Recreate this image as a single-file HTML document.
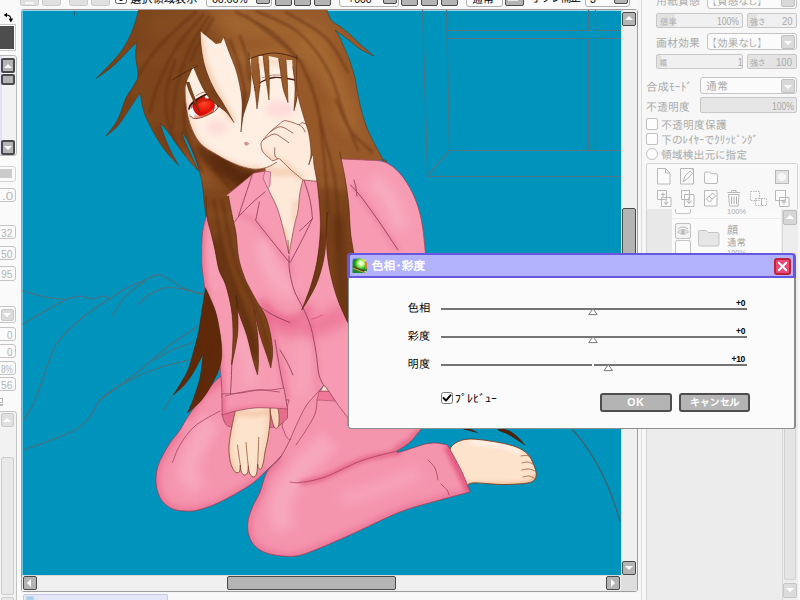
<!DOCTYPE html>
<html lang="ja">
<head>
<meta charset="utf-8">
<title>色相・彩度</title>
<style>
html,body{margin:0;padding:0;}
body{width:800px;height:600px;overflow:hidden;position:relative;background:#f4f4f4;font-family:"Liberation Sans","IPAGothic",sans-serif;font-size:12px;color:#000;}
div,span{box-sizing:border-box;}
.abs{position:absolute;}
.t{position:absolute;white-space:nowrap;line-height:1;}
.dis{color:#a4a4a4;}
/* generic small button like SAI */
.sbtn{position:absolute;background:#b4b4b4;border:1.5px solid #4a4a4a;border-radius:2px;}
.lbtn{position:absolute;background:#e0e0e0;border:1.5px solid #cacaca;border-radius:2.5px;}
.box{position:absolute;background:#fbfbfb;border:1px solid #c4c4c4;border-radius:3px;}
.gbox{position:absolute;background:#ececec;border:1px solid #c8c8c8;border-radius:2px;}
.tri-u{position:absolute;width:0;height:0;border-left:4px solid transparent;border-right:4px solid transparent;border-bottom:4px solid #fff;}
.tri-d{position:absolute;width:0;height:0;border-left:4px solid transparent;border-right:4px solid transparent;border-top:4px solid #fff;}
.tri-l{position:absolute;width:0;height:0;border-top:4px solid transparent;border-bottom:4px solid transparent;border-right:4px solid #fff;}
.tri-r{position:absolute;width:0;height:0;border-top:4px solid transparent;border-bottom:4px solid transparent;border-left:4px solid #fff;}
</style>
</head>
<body>

<!-- ===== canvas frame ===== -->
<div class="abs" id="frame" style="left:21px;top:9px;width:617px;height:583px;border:1px solid #a39c9c;border-radius:3px;background:#f0f0f0;"></div>

<!-- ===== illustration ===== -->
<svg class="abs" id="art" style="left:22px;top:10px;" width="599" height="565" viewBox="22 10 599 565">
<rect x="22" y="10" width="599" height="565" fill="#0093bb"/>
<defs>
<filter id="b1" filterUnits="userSpaceOnUse" x="0" y="0" width="800" height="600"><feGaussianBlur stdDeviation="0.8"/></filter>
<filter id="b2" filterUnits="userSpaceOnUse" x="0" y="0" width="800" height="600"><feGaussianBlur stdDeviation="2"/></filter>
<filter id="b3" filterUnits="userSpaceOnUse" x="0" y="0" width="800" height="600"><feGaussianBlur stdDeviation="3.2"/></filter>
<filter id="b5" filterUnits="userSpaceOnUse" x="0" y="0" width="800" height="600"><feGaussianBlur stdDeviation="5.5"/></filter>
<filter id="b8" filterUnits="userSpaceOnUse" x="0" y="0" width="800" height="600"><feGaussianBlur stdDeviation="9"/></filter>
<linearGradient id="skinF" x1="0" y1="0" x2="1" y2="1"><stop offset="0" stop-color="#fff1e6"/><stop offset="1" stop-color="#fde4d2"/></linearGradient>
<radialGradient id="iris" cx="0.55" cy="0.35" r="0.75"><stop offset="0" stop-color="#ff4a2a"/><stop offset="0.55" stop-color="#ec1408"/><stop offset="1" stop-color="#a00000"/></radialGradient>
</defs>
<rect x="22" y="10" width="599" height="1" fill="#9ad6ec"/><rect x="22" y="10" width="1" height="565" fill="#6cc4e2"/><path d="M74.500,11 V15.500" stroke="#1f5f78" stroke-width="1"/>
<g fill="none" stroke="#4b7585" stroke-width="1.2" stroke-linecap="round">
<path d="M422.5,10 L427.6,175.5 M446.5,10 L449.5,150 M446.5,30.5 H588.5 M595.5,30.5 H621 M447,38.5 H588.5 M595.5,38.5 H621 M588.5,10 V30.5 M588.5,38.5 V150.5 M595.5,10 V30.5 M595.5,38.5 V150.5 M449.5,150.5 H621 M449.5,150.5 L427.6,175.5 M427.6,176.5 H621"/>
<path d="M571,428 Q603,462 620,521" stroke="#41606c" stroke-width="1.2"/>
</g>
<g fill="none" stroke="#4c6f7d" stroke-width="1.1" stroke-linecap="round">
<path d="M23.0,291.0 C26.7,292.0 38.0,295.7 45.0,297.0 C52.0,298.3 59.2,299.2 65.0,299.0 C70.8,298.8 75.4,296.0 80.0,296.0 C84.6,296.0 88.8,299.0 92.5,299.0 C96.2,299.0 99.8,296.0 102.5,296.0 C105.2,296.0 107.9,298.5 109.0,299.0" fill="none"/>
<path d="M109.0,299.0 C112.1,297.1 121.5,290.7 127.5,287.5 C133.5,284.3 139.6,282.1 145.0,280.0 C150.4,277.9 153.8,273.8 160.0,275.0 C166.2,276.2 175.4,284.2 182.5,287.5 C189.6,290.8 199.2,293.8 202.5,295.0" fill="none"/>
<path d="M23.0,324.0 C26.7,321.8 38.0,315.0 45.0,311.0 C52.0,307.0 61.7,301.8 65.0,300.0" fill="none"/>
<path d="M109.0,299.0 C104.6,302.1 91.1,310.2 82.5,317.5 C73.9,324.8 63.3,334.6 57.5,342.5 C51.7,350.4 51.2,355.4 47.5,365.0 C43.8,374.6 38.9,390.8 35.0,400.0 C31.1,409.2 25.8,416.7 24.0,420.0" fill="none"/>
<path d="M145.0,281.0 C141.7,283.7 130.4,291.2 125.0,297.0 C119.6,302.8 114.6,312.8 112.5,316.0" fill="none"/>
<path d="M204.0,294.0 C198.3,292.9 179.0,287.5 170.0,287.5 C161.0,287.5 155.4,291.1 150.0,294.0 C144.6,296.9 139.6,303.2 137.5,305.0" fill="none"/>
<path d="M200.0,325.0 C195.0,328.3 180.0,337.5 170.0,345.0 C160.0,352.5 151.7,360.8 140.0,370.0 C128.3,379.2 106.7,395.0 100.0,400.0" fill="none"/>
<path d="M200.0,357.5 C193.3,359.2 171.7,363.8 160.0,367.5 C148.3,371.2 139.6,375.0 130.0,380.0 C120.4,385.0 109.6,390.8 102.5,397.5 C95.4,404.2 92.9,414.2 87.5,420.0 C82.1,425.8 80.6,427.5 70.0,432.5 C59.4,437.5 31.7,447.1 24.0,450.0" fill="none"/>
<path d="M192.5,342.5 C189.1,343.8 178.2,347.1 172.0,350.0 C165.8,352.9 157.8,358.3 155.0,360.0" fill="none"/>
<path d="M185.0,385.0 C182.8,386.8 175.5,391.8 172.0,396.0 C168.5,400.2 165.3,407.7 164.0,410.0" fill="none"/>
</g>
<path d="M139.5,6.0 C138.8,8.8 136.8,17.7 135.0,23.0 C133.2,28.3 131.5,33.0 129.0,38.0 C126.5,43.0 123.8,48.0 120.0,53.0 C116.2,58.0 110.5,63.8 106.5,68.0 C102.5,72.2 97.8,76.8 96.0,78.5 C98.8,76.5 107.2,71.0 112.5,66.5 C117.8,62.0 123.5,55.5 127.5,51.5 C131.5,47.5 135.0,44.0 136.5,42.5 C136.4,45.0 135.5,52.0 135.8,57.5 C136.0,63.0 138.4,70.8 138.0,75.5 C137.6,80.2 135.5,82.2 133.5,86.0 C131.5,89.8 128.7,92.3 126.0,98.0 C123.3,103.7 120.8,113.7 117.5,120.0 C114.2,126.3 107.9,133.3 106.0,136.0 C108.1,134.2 114.5,129.7 118.5,125.0 C122.5,120.3 126.4,113.3 130.0,108.0 C133.6,102.7 138.3,95.5 140.0,93.0 C140.8,96.7 142.0,107.2 145.0,115.0 C148.0,122.8 154.2,133.5 158.0,140.0 C161.8,146.5 164.6,149.8 168.0,154.0 C171.4,158.2 176.9,163.6 178.7,165.5 C177.5,163.4 174.0,157.8 171.7,153.0 C169.4,148.2 166.6,142.0 164.7,137.0 C162.8,132.0 160.8,125.3 160.0,123.0 C161.2,124.2 164.5,127.3 167.0,130.5 C169.5,133.7 172.3,138.2 175.0,142.0 C177.7,145.8 180.1,149.2 183.0,153.0 C185.9,156.8 190.1,162.0 192.7,165.0 C195.3,168.0 197.5,169.8 198.5,170.8 C197.1,167.9 192.7,158.6 190.3,153.3 C187.9,148.0 185.4,142.6 184.0,139.0 C182.6,135.4 182.3,133.2 182.0,132.0 C183.0,133.6 185.8,137.4 188.0,141.7 C190.2,146.0 192.9,152.2 195.0,158.0 C197.1,163.8 199.5,171.4 200.8,176.7 C202.1,182.0 202.4,185.6 203.0,190.0 C203.6,194.4 203.8,198.5 204.3,203.0 C204.8,207.5 205.7,214.7 206.0,217.0 C207.5,229.2 213.5,277.8 215.0,290.0 C222.5,277.5 252.5,227.5 260.0,215.0 C271.7,215.0 318.3,215.0 330.0,215.0 C332.5,206.7 342.5,173.3 345.0,165.0 C351.3,164.2 376.3,160.3 383.0,160.0 C389.7,159.7 384.7,162.5 385.0,163.0 C382.8,159.0 375.6,146.5 372.0,139.0 C368.4,131.5 365.8,125.3 363.5,118.0 C361.2,110.7 359.5,101.8 358.0,95.0 C356.5,88.2 356.2,83.3 354.8,77.5 C353.3,71.7 351.3,65.1 349.5,60.0 C347.7,54.9 345.8,51.0 344.0,47.0 C342.2,43.0 340.5,38.8 339.0,36.0 C337.5,33.2 335.7,31.0 335.0,30.0 C336.2,30.8 339.5,33.2 342.0,35.0 C344.5,36.8 347.0,38.7 350.0,41.0 C353.0,43.3 356.0,46.5 360.0,49.0 C364.0,51.5 371.7,54.8 374.0,56.0 C372.0,54.3 366.0,49.6 362.0,46.0 C358.0,42.4 353.7,37.8 350.0,34.5 C346.3,31.2 343.2,28.9 340.0,26.5 C336.8,24.1 333.2,22.8 331.0,20.0 C328.8,17.2 327.7,11.7 327.0,10.0 C326.8,9.3 326.2,6.7 326.0,6.0 C294.9,6.0 170.6,6.0 139.5,6.0Z" fill="#97592a"/>
<clipPath id="cBack"><path d="M139.5,6.0 C138.8,8.8 136.8,17.7 135.0,23.0 C133.2,28.3 131.5,33.0 129.0,38.0 C126.5,43.0 123.8,48.0 120.0,53.0 C116.2,58.0 110.5,63.8 106.5,68.0 C102.5,72.2 97.8,76.8 96.0,78.5 C98.8,76.5 107.2,71.0 112.5,66.5 C117.8,62.0 123.5,55.5 127.5,51.5 C131.5,47.5 135.0,44.0 136.5,42.5 C136.4,45.0 135.5,52.0 135.8,57.5 C136.0,63.0 138.4,70.8 138.0,75.5 C137.6,80.2 135.5,82.2 133.5,86.0 C131.5,89.8 128.7,92.3 126.0,98.0 C123.3,103.7 120.8,113.7 117.5,120.0 C114.2,126.3 107.9,133.3 106.0,136.0 C108.1,134.2 114.5,129.7 118.5,125.0 C122.5,120.3 126.4,113.3 130.0,108.0 C133.6,102.7 138.3,95.5 140.0,93.0 C140.8,96.7 142.0,107.2 145.0,115.0 C148.0,122.8 154.2,133.5 158.0,140.0 C161.8,146.5 164.6,149.8 168.0,154.0 C171.4,158.2 176.9,163.6 178.7,165.5 C177.5,163.4 174.0,157.8 171.7,153.0 C169.4,148.2 166.6,142.0 164.7,137.0 C162.8,132.0 160.8,125.3 160.0,123.0 C161.2,124.2 164.5,127.3 167.0,130.5 C169.5,133.7 172.3,138.2 175.0,142.0 C177.7,145.8 180.1,149.2 183.0,153.0 C185.9,156.8 190.1,162.0 192.7,165.0 C195.3,168.0 197.5,169.8 198.5,170.8 C197.1,167.9 192.7,158.6 190.3,153.3 C187.9,148.0 185.4,142.6 184.0,139.0 C182.6,135.4 182.3,133.2 182.0,132.0 C183.0,133.6 185.8,137.4 188.0,141.7 C190.2,146.0 192.9,152.2 195.0,158.0 C197.1,163.8 199.5,171.4 200.8,176.7 C202.1,182.0 202.4,185.6 203.0,190.0 C203.6,194.4 203.8,198.5 204.3,203.0 C204.8,207.5 205.7,214.7 206.0,217.0 C207.5,229.2 213.5,277.8 215.0,290.0 C222.5,277.5 252.5,227.5 260.0,215.0 C271.7,215.0 318.3,215.0 330.0,215.0 C332.5,206.7 342.5,173.3 345.0,165.0 C351.3,164.2 376.3,160.3 383.0,160.0 C389.7,159.7 384.7,162.5 385.0,163.0 C382.8,159.0 375.6,146.5 372.0,139.0 C368.4,131.5 365.8,125.3 363.5,118.0 C361.2,110.7 359.5,101.8 358.0,95.0 C356.5,88.2 356.2,83.3 354.8,77.5 C353.3,71.7 351.3,65.1 349.5,60.0 C347.7,54.9 345.8,51.0 344.0,47.0 C342.2,43.0 340.5,38.8 339.0,36.0 C337.5,33.2 335.7,31.0 335.0,30.0 C336.2,30.8 339.5,33.2 342.0,35.0 C344.5,36.8 347.0,38.7 350.0,41.0 C353.0,43.3 356.0,46.5 360.0,49.0 C364.0,51.5 371.7,54.8 374.0,56.0 C372.0,54.3 366.0,49.6 362.0,46.0 C358.0,42.4 353.7,37.8 350.0,34.5 C346.3,31.2 343.2,28.9 340.0,26.5 C336.8,24.1 333.2,22.8 331.0,20.0 C328.8,17.2 327.7,11.7 327.0,10.0 C326.8,9.3 326.2,6.7 326.0,6.0 C294.9,6.0 170.6,6.0 139.5,6.0Z"/></clipPath>
<g clip-path="url(#cBack)">
<path d="M150.0,30.0 C153.3,29.0 161.7,25.3 170.0,24.0 C178.3,22.7 188.3,22.0 200.0,22.0 C211.7,22.0 225.0,22.7 240.0,24.0 C255.0,25.3 275.0,27.0 290.0,30.0 C305.0,33.0 323.3,40.0 330.0,42.0" stroke="#a56a34" stroke-width="24" filter="url(#b8)" opacity="0.8" fill="none"/>
<path d="M300.0,40.0 C304.2,43.3 318.3,50.8 325.0,60.0 C331.7,69.2 335.5,83.3 340.0,95.0 C344.5,106.7 350.0,124.2 352.0,130.0" stroke="#ac7038" stroke-width="18" filter="url(#b5)" opacity="0.7" fill="none"/>
<path d="M120.0,62.0 C125.0,61.3 139.2,59.7 150.0,58.0 C160.8,56.3 179.2,53.0 185.0,52.0" stroke="#a06632" stroke-width="12" filter="url(#b5)" opacity="0.7" fill="none"/>
<path d="M232.0,50.0 C234.3,51.3 241.0,57.0 246.0,58.0 C251.0,59.0 254.7,57.0 262.0,56.0 C269.3,55.0 280.7,50.3 290.0,52.0 C299.3,53.7 309.7,59.7 318.0,66.0 C326.3,72.3 336.3,86.0 340.0,90.0" stroke="#a56a36" stroke-width="12" filter="url(#b5)" opacity="0.75" fill="none"/>
<path d="M206.0,212.0 C208.3,212.7 215.7,214.7 220.0,216.0 C224.3,217.3 230.0,219.3 232.0,220.0" stroke="#a86c38" stroke-width="9" filter="url(#b3)" opacity="0.6" fill="none"/>
<path d="M318.0,183.0 C320.3,183.2 327.3,183.2 332.0,184.0 C336.7,184.8 343.7,187.3 346.0,188.0" stroke="#a86c38" stroke-width="9" filter="url(#b3)" opacity="0.55" fill="none"/>
<path d="M325.0,110.0 C328.3,112.5 338.3,119.2 345.0,125.0 C351.7,130.8 361.7,141.7 365.0,145.0" stroke="#a06632" stroke-width="10" filter="url(#b5)" opacity="0.6" fill="none"/>
<rect x="150" y="185" width="230" height="260" fill="#4a1a04" opacity="0.34" filter="url(#b8)"/>
<ellipse cx="150" cy="70" rx="75" ry="95" fill="#4a1f06" opacity="0.32" filter="url(#b8)"/>
<path d="M212.0,150.0 C214.7,153.3 222.5,165.0 228.0,170.0 C233.5,175.0 239.3,178.7 245.0,180.0 C250.7,181.3 259.2,178.3 262.0,178.0" stroke="#542608" stroke-width="20" filter="url(#b5)" opacity="0.85" fill="none"/>
<path d="M198.0,146.0 C200.3,148.7 206.3,157.5 212.0,162.0 C217.7,166.5 225.0,170.3 232.0,173.0 C239.0,175.7 250.3,177.2 254.0,178.0" stroke="#5a2a0c" stroke-width="12" filter="url(#b3)" opacity="0.7" fill="none"/>
<path d="M240.0,190.0 C242.5,189.3 252.5,186.7 255.0,186.0" stroke="#542608" stroke-width="16" filter="url(#b3)" opacity="0.8" fill="none"/>
<path d="M212.0,240.0 C214.0,246.7 219.0,266.7 224.0,280.0 C229.0,293.3 236.3,307.5 242.0,320.0 C247.7,332.5 255.3,349.2 258.0,355.0" stroke="#5a2c10" stroke-width="16" filter="url(#b3)" opacity="0.55" fill="none"/>
<path d="M322.0,230.0 C321.3,236.7 320.7,258.3 318.0,270.0 C315.3,281.7 308.0,295.0 306.0,300.0" stroke="#5a2c10" stroke-width="8" filter="url(#b3)" opacity="0.55" fill="none"/>
<path d="M338.0,215.0 C338.3,220.8 339.3,237.5 340.0,250.0 C340.7,262.5 340.7,278.3 342.0,290.0 C343.3,301.7 347.0,315.0 348.0,320.0" stroke="#5a2c10" stroke-width="12" filter="url(#b3)" opacity="0.5" fill="none"/>
<path d="M96.0,78.0 C98.7,76.3 106.7,72.0 112.0,68.0 C117.3,64.0 125.3,56.3 128.0,54.0" stroke="#6a3616" stroke-width="4" filter="url(#b2)" opacity="0.5" fill="none"/>
<path d="M106.0,136.0 C108.3,133.0 115.7,124.7 120.0,118.0 C124.3,111.3 130.0,99.7 132.0,96.0" stroke="#6a3616" stroke-width="5" filter="url(#b2)" opacity="0.5" fill="none"/>
<path d="M178.0,166.0 C176.0,162.7 169.7,152.7 166.0,146.0 C162.3,139.3 157.7,129.3 156.0,126.0" stroke="#6a3616" stroke-width="5" filter="url(#b2)" opacity="0.5" fill="none"/>
<path d="M200.0,170.0 C198.3,166.7 193.3,156.0 190.0,150.0 C186.7,144.0 181.7,136.7 180.0,134.0" stroke="#6a3616" stroke-width="5" filter="url(#b2)" opacity="0.5" fill="none"/>
<path d="M241.0,127.0 C241.3,123.8 242.2,113.8 243.0,108.0 C243.8,102.2 245.5,94.7 246.0,92.0" stroke="#5e2e12" stroke-width="4" filter="url(#b2)" opacity="0.55" fill="none"/>
<path d="M233.0,121.0 C231.2,118.2 225.5,109.2 222.0,104.0 C218.5,98.8 213.7,92.3 212.0,90.0" stroke="#5e2e12" stroke-width="4" filter="url(#b2)" opacity="0.55" fill="none"/>
<g fill="none" stroke="#5a2a0e" stroke-width="2.2" stroke-linecap="round" opacity="0.5" filter="url(#b1)">
<path d="M196.0,12.0 C190.8,16.7 174.3,30.0 165.0,40.0 C155.7,50.0 146.8,62.0 140.0,72.0 C133.2,82.0 126.7,95.3 124.0,100.0" fill="none"/>
<path d="M204.0,14.0 C199.7,19.2 185.7,33.2 178.0,45.0 C170.3,56.8 162.7,73.8 158.0,85.0 C153.3,96.2 151.3,107.5 150.0,112.0" fill="none"/>
<path d="M209.0,16.0 C205.8,21.3 195.5,35.7 190.0,48.0 C184.5,60.3 179.0,76.7 176.0,90.0 C173.0,103.3 172.7,121.7 172.0,128.0" fill="none"/>
<path d="M213.0,18.0 C210.5,22.5 201.8,37.7 198.0,45.0 C194.2,52.3 191.3,59.2 190.0,62.0" fill="none"/>
<path d="M175.0,60.0 C173.5,65.8 166.8,83.3 166.0,95.0 C165.2,106.7 167.0,119.8 170.0,130.0 C173.0,140.2 181.7,151.7 184.0,156.0" fill="none"/>
<path d="M186.0,100.0 C185.7,104.2 183.0,116.7 184.0,125.0 C185.0,133.3 189.0,142.2 192.0,150.0 C195.0,157.8 200.3,168.3 202.0,172.0" fill="none"/>
<path d="M236.0,12.0 C242.0,15.3 261.3,23.7 272.0,32.0 C282.7,40.3 292.7,50.7 300.0,62.0 C307.3,73.3 312.3,87.0 316.0,100.0 C319.7,113.0 320.3,126.7 322.0,140.0 C323.7,153.3 325.0,167.5 326.0,180.0 C327.0,192.5 327.7,209.2 328.0,215.0" fill="none"/>
<path d="M256.0,11.0 C263.0,14.5 286.0,22.2 298.0,32.0 C310.0,41.8 320.3,56.2 328.0,70.0 C335.7,83.8 339.0,101.7 344.0,115.0 C349.0,128.3 355.7,144.2 358.0,150.0" fill="none"/>
<path d="M246.0,16.0 C251.7,20.3 271.3,34.7 280.0,42.0 C288.7,49.3 295.0,57.0 298.0,60.0" fill="none"/>
<path d="M286.0,12.0 C292.7,16.3 315.7,28.0 326.0,38.0 C336.3,48.0 344.3,66.3 348.0,72.0" fill="none"/>
<path d="M300.0,60.0 C302.3,65.8 310.0,82.5 314.0,95.0 C318.0,107.5 320.7,121.7 324.0,135.0 C327.3,148.3 331.7,161.7 334.0,175.0 C336.3,188.3 337.3,202.5 338.0,215.0 C338.7,227.5 338.0,244.2 338.0,250.0" fill="none"/>
<path d="M336.0,100.0 C338.3,105.0 344.0,121.3 350.0,130.0 C356.0,138.7 368.3,148.3 372.0,152.0" fill="none"/>
<path d="M214.0,200.0 C215.0,205.8 218.0,224.7 220.0,235.0 C222.0,245.3 223.3,252.8 226.0,262.0 C228.7,271.2 232.3,279.5 236.0,290.0 C239.7,300.5 244.7,313.3 248.0,325.0 C251.3,336.7 254.7,354.2 256.0,360.0" fill="none"/>
<path d="M222.0,200.0 C223.3,206.7 227.3,228.3 230.0,240.0 C232.7,251.7 234.3,260.0 238.0,270.0 C241.7,280.0 247.7,290.0 252.0,300.0 C256.3,310.0 261.0,320.0 264.0,330.0 C267.0,340.0 269.0,355.0 270.0,360.0" fill="none"/>
<path d="M210.0,290.0 C209.0,295.8 206.7,313.3 204.0,325.0 C201.3,336.7 198.0,348.8 194.0,360.0 C190.0,371.2 182.3,386.7 180.0,392.0" fill="none"/>
<path d="M216.0,300.0 C215.3,305.8 214.0,323.7 212.0,335.0 C210.0,346.3 207.0,357.5 204.0,368.0 C201.0,378.5 195.7,393.0 194.0,398.0" fill="none"/>
<path d="M214.0,168.0 C216.3,171.0 223.0,181.3 228.0,186.0 C233.0,190.7 241.3,194.3 244.0,196.0" fill="none"/>
<path d="M222.0,160.0 C224.7,162.5 232.3,171.7 238.0,175.0 C243.7,178.3 253.0,179.2 256.0,180.0" fill="none"/>
<path d="M230.0,40.0 C231.3,43.7 235.7,54.0 238.0,62.0 C240.3,70.0 243.2,79.7 244.0,88.0 C244.8,96.3 243.2,108.0 243.0,112.0" fill="none"/>
<path d="M240.0,36.0 C241.2,39.7 245.5,50.7 247.0,58.0 C248.5,65.3 248.7,76.3 249.0,80.0" fill="none"/>
</g>
</g>
<path d="M139.5,6.0 C138.8,8.8 136.8,17.7 135.0,23.0 C133.2,28.3 131.5,33.0 129.0,38.0 C126.5,43.0 123.8,48.0 120.0,53.0 C116.2,58.0 110.5,63.8 106.5,68.0 C102.5,72.2 97.8,76.8 96.0,78.5 C98.8,76.5 107.2,71.0 112.5,66.5 C117.8,62.0 123.5,55.5 127.5,51.5 C131.5,47.5 135.0,44.0 136.5,42.5 C136.4,45.0 135.5,52.0 135.8,57.5 C136.0,63.0 138.4,70.8 138.0,75.5 C137.6,80.2 135.5,82.2 133.5,86.0 C131.5,89.8 128.7,92.3 126.0,98.0 C123.3,103.7 120.8,113.7 117.5,120.0 C114.2,126.3 107.9,133.3 106.0,136.0 C108.1,134.2 114.5,129.7 118.5,125.0 C122.5,120.3 126.4,113.3 130.0,108.0 C133.6,102.7 138.3,95.5 140.0,93.0 C140.8,96.7 142.0,107.2 145.0,115.0 C148.0,122.8 154.2,133.5 158.0,140.0 C161.8,146.5 164.6,149.8 168.0,154.0 C171.4,158.2 176.9,163.6 178.7,165.5 C177.5,163.4 174.0,157.8 171.7,153.0 C169.4,148.2 166.6,142.0 164.7,137.0 C162.8,132.0 160.8,125.3 160.0,123.0 C161.2,124.2 164.5,127.3 167.0,130.5 C169.5,133.7 172.3,138.2 175.0,142.0 C177.7,145.8 180.1,149.2 183.0,153.0 C185.9,156.8 190.1,162.0 192.7,165.0 C195.3,168.0 197.5,169.8 198.5,170.8 C197.1,167.9 192.7,158.6 190.3,153.3 C187.9,148.0 185.4,142.6 184.0,139.0 C182.6,135.4 182.3,133.2 182.0,132.0 C183.0,133.6 185.8,137.4 188.0,141.7 C190.2,146.0 192.9,152.2 195.0,158.0 C197.1,163.8 199.5,171.4 200.8,176.7 C202.1,182.0 202.4,185.6 203.0,190.0 C203.6,194.4 203.8,198.5 204.3,203.0 C204.8,207.5 205.7,214.7 206.0,217.0 C207.5,229.2 213.5,277.8 215.0,290.0 C222.5,277.5 252.5,227.5 260.0,215.0 C271.7,215.0 318.3,215.0 330.0,215.0 C332.5,206.7 342.5,173.3 345.0,165.0 C351.3,164.2 376.3,160.3 383.0,160.0 C389.7,159.7 384.7,162.5 385.0,163.0 C382.8,159.0 375.6,146.5 372.0,139.0 C368.4,131.5 365.8,125.3 363.5,118.0 C361.2,110.7 359.5,101.8 358.0,95.0 C356.5,88.2 356.2,83.3 354.8,77.5 C353.3,71.7 351.3,65.1 349.5,60.0 C347.7,54.9 345.8,51.0 344.0,47.0 C342.2,43.0 340.5,38.8 339.0,36.0 C337.5,33.2 335.7,31.0 335.0,30.0 C336.2,30.8 339.5,33.2 342.0,35.0 C344.5,36.8 347.0,38.7 350.0,41.0 C353.0,43.3 356.0,46.5 360.0,49.0 C364.0,51.5 371.7,54.8 374.0,56.0 C372.0,54.3 366.0,49.6 362.0,46.0 C358.0,42.4 353.7,37.8 350.0,34.5 C346.3,31.2 343.2,28.9 340.0,26.5 C336.8,24.1 333.2,22.8 331.0,20.0 C328.8,17.2 327.7,11.7 327.0,10.0 C326.8,9.3 326.2,6.7 326.0,6.0 C294.9,6.0 170.6,6.0 139.5,6.0Z" fill="none" stroke="#5a2a10" stroke-width="0.7" opacity="0.7"/>
<path d="M463.0,427.0 C464.2,427.2 467.3,427.4 470.0,428.5 C472.7,429.6 477.5,432.7 479.0,433.5 C477.5,433.1 472.7,431.7 470.0,431.0 C467.3,430.3 464.2,429.8 463.0,429.5 C463.0,429.1 463.0,427.4 463.0,427.0Z" fill="#4a2410"/>
<path d="M498.0,427.0 C500.0,427.7 506.5,429.2 510.0,431.0 C513.5,432.8 516.3,435.5 519.0,438.0 C521.7,440.5 524.8,444.7 526.0,446.0 C524.3,444.9 519.2,441.5 516.0,439.5 C512.8,437.5 510.0,435.5 507.0,434.0 C504.0,432.5 499.5,431.1 498.0,430.5 C498.0,429.9 498.0,427.6 498.0,427.0Z" fill="#4a2410"/>
<clipPath id="cFoot"><path d="M450.0,449.0 C452.2,443.9 458.3,440.8 465.0,439.5 C471.7,438.2 481.7,439.8 490.0,441.0 C498.3,442.2 508.8,444.3 515.0,446.5 C521.2,448.7 524.6,451.4 527.5,454.0 C530.4,456.6 531.1,459.0 532.5,462.0 C533.9,465.0 535.6,469.2 536.0,472.0 C536.4,474.8 536.4,477.2 535.0,479.0 C533.6,480.8 532.9,482.1 527.5,483.0 C522.1,483.9 511.7,484.5 502.5,484.5 C493.3,484.5 478.6,482.4 472.5,483.0 C466.4,483.6 467.1,487.2 466.0,488.0 C463.7,485.0 454.3,473.0 452.0,470.0 C451.7,466.5 447.8,454.1 450.0,449.0Z"/></clipPath>
<path d="M450.0,449.0 C452.2,443.9 458.3,440.8 465.0,439.5 C471.7,438.2 481.7,439.8 490.0,441.0 C498.3,442.2 508.8,444.3 515.0,446.5 C521.2,448.7 524.6,451.4 527.5,454.0 C530.4,456.6 531.1,459.0 532.5,462.0 C533.9,465.0 535.6,469.2 536.0,472.0 C536.4,474.8 536.4,477.2 535.0,479.0 C533.6,480.8 532.9,482.1 527.5,483.0 C522.1,483.9 511.7,484.5 502.5,484.5 C493.3,484.5 478.6,482.4 472.5,483.0 C466.4,483.6 467.1,487.2 466.0,488.0 C463.7,485.0 454.3,473.0 452.0,470.0 C451.7,466.5 447.8,454.1 450.0,449.0Z" fill="#fde2cc"/>
<g clip-path="url(#cFoot)">
<path d="M462.0,486.0 C468.3,486.1 488.7,486.8 500.0,486.5 C511.3,486.2 523.8,485.8 530.0,484.0 C536.2,482.2 535.8,477.3 537.0,476.0" stroke="#e8a878" stroke-width="7" filter="url(#b2)" opacity="0.75" fill="none"/>
<path d="M470.0,442.0 C475.0,442.5 491.7,443.3 500.0,445.0 C508.3,446.7 516.7,450.8 520.0,452.0" stroke="#fff4ea" stroke-width="6" filter="url(#b2)" opacity="0.8" fill="none"/>
</g>
<path d="M450.0,449.0 C452.2,443.9 458.3,440.8 465.0,439.5 C471.7,438.2 481.7,439.8 490.0,441.0 C498.3,442.2 508.8,444.3 515.0,446.5 C521.2,448.7 524.6,451.4 527.5,454.0 C530.4,456.6 531.1,459.0 532.5,462.0 C533.9,465.0 535.6,469.2 536.0,472.0 C536.4,474.8 536.4,477.2 535.0,479.0 C533.6,480.8 532.9,482.1 527.5,483.0 C522.1,483.9 511.7,484.5 502.5,484.5 C493.3,484.5 478.6,482.4 472.5,483.0 C466.4,483.6 467.1,487.2 466.0,488.0 C463.7,485.0 454.3,473.0 452.0,470.0 C451.7,466.5 447.8,454.1 450.0,449.0Z" fill="none" stroke="#7a3a20" stroke-width="0.9"/>
<g fill="none" stroke="#a05a38" stroke-width="0.8" stroke-linecap="round">
<path d="M521.0,456.0 C522.0,455.9 525.3,455.2 527.0,455.5 C528.7,455.8 530.3,457.6 531.0,458.0" fill="none"/>
<path d="M522.0,463.0 C523.0,462.8 526.1,461.8 528.0,462.0 C529.9,462.2 532.6,464.1 533.5,464.5" fill="none"/>
<path d="M522.0,470.0 C523.2,469.8 526.8,468.8 529.0,469.0 C531.2,469.2 534.0,470.7 535.0,471.0" fill="none"/>
<path d="M523.0,477.0 C524.0,476.8 527.2,475.8 529.0,476.0 C530.8,476.2 533.2,477.7 534.0,478.0" fill="none"/>
</g>
<clipPath id="cL"><path d="M245.0,370.0 C241.1,371.0 228.3,371.8 221.5,376.0 C214.7,380.2 209.4,388.5 204.0,395.0 C198.6,401.5 193.0,409.2 189.0,415.0 C185.0,420.8 183.2,425.3 180.0,430.0 C176.8,434.7 172.8,438.8 170.0,443.0 C167.2,447.2 165.0,451.2 163.0,455.0 C161.0,458.8 159.2,462.2 158.0,466.0 C156.8,469.8 156.1,473.8 156.0,478.0 C155.9,482.2 156.3,487.0 157.5,491.0 C158.7,495.0 160.4,499.0 163.0,502.0 C165.6,505.0 169.3,507.5 173.0,509.0 C176.7,510.5 180.8,510.8 185.0,511.0 C189.2,511.2 192.2,511.5 198.0,510.0 C203.8,508.5 211.3,506.2 220.0,502.0 C228.7,497.8 242.2,490.3 250.0,485.0 C257.8,479.7 261.7,475.0 267.0,470.0 C272.3,465.0 276.5,461.7 282.0,455.0 C287.5,448.3 297.0,434.2 300.0,430.0 C300.0,420.3 300.0,381.7 300.0,372.0 C290.8,371.7 254.2,370.3 245.0,370.0Z"/></clipPath>
<clipPath id="cR"><path d="M300.0,390.0 C298.3,398.3 291.7,431.7 290.0,440.0 C288.3,443.0 283.8,452.7 280.0,458.0 C276.2,463.3 270.3,466.3 267.0,472.0 C263.7,477.7 262.4,486.2 260.0,492.0 C257.6,497.8 254.5,502.2 252.5,507.0 C250.5,511.8 248.7,516.5 248.0,521.0 C247.3,525.5 247.5,530.0 248.5,534.0 C249.5,538.0 251.4,542.0 254.0,545.0 C256.6,548.0 260.0,550.2 264.0,552.0 C268.0,553.8 272.7,554.8 278.0,555.5 C283.3,556.2 289.8,556.9 296.0,556.0 C302.2,555.1 306.0,553.5 315.0,550.0 C324.0,546.5 335.8,541.3 350.0,535.0 C364.2,528.7 385.0,517.8 400.0,512.0 C415.0,506.2 428.3,503.3 440.0,500.0 C451.7,496.7 465.0,493.3 470.0,492.0 C468.5,488.3 464.8,477.8 461.0,470.0 C457.2,462.2 449.8,449.2 447.5,445.0 C445.6,444.7 439.8,443.2 436.0,443.0 C432.2,442.8 426.8,443.8 425.0,444.0 C420.8,445.3 404.7,450.8 400.0,452.0 C395.3,453.2 397.5,451.2 397.0,451.0 C399.2,449.5 405.8,445.8 410.0,442.0 C414.2,438.2 420.0,430.3 422.0,428.0 C423.3,421.7 428.7,396.3 430.0,390.0 C408.3,390.0 321.7,390.0 300.0,390.0Z"/></clipPath>
<path d="M245.0,370.0 C241.1,371.0 228.3,371.8 221.5,376.0 C214.7,380.2 209.4,388.5 204.0,395.0 C198.6,401.5 193.0,409.2 189.0,415.0 C185.0,420.8 183.2,425.3 180.0,430.0 C176.8,434.7 172.8,438.8 170.0,443.0 C167.2,447.2 165.0,451.2 163.0,455.0 C161.0,458.8 159.2,462.2 158.0,466.0 C156.8,469.8 156.1,473.8 156.0,478.0 C155.9,482.2 156.3,487.0 157.5,491.0 C158.7,495.0 160.4,499.0 163.0,502.0 C165.6,505.0 169.3,507.5 173.0,509.0 C176.7,510.5 180.8,510.8 185.0,511.0 C189.2,511.2 192.2,511.5 198.0,510.0 C203.8,508.5 211.3,506.2 220.0,502.0 C228.7,497.8 242.2,490.3 250.0,485.0 C257.8,479.7 261.7,475.0 267.0,470.0 C272.3,465.0 276.5,461.7 282.0,455.0 C287.5,448.3 297.0,434.2 300.0,430.0 C300.0,420.3 300.0,381.7 300.0,372.0 C290.8,371.7 254.2,370.3 245.0,370.0Z" fill="#f594ad"/>
<g clip-path="url(#cL)">
<path d="M180.0,430.0 C178.3,432.2 172.8,438.8 170.0,443.0 C167.2,447.2 165.0,451.2 163.0,455.0 C161.0,458.8 159.2,462.2 158.0,466.0 C156.8,469.8 156.1,473.8 156.0,478.0 C155.9,482.2 156.3,487.0 157.5,491.0 C158.7,495.0 160.4,499.0 163.0,502.0 C165.6,505.0 169.3,507.4 173.0,509.0 C176.7,510.6 180.8,511.2 185.0,511.5 C189.2,511.8 192.2,511.9 198.0,510.5 C203.8,509.1 211.3,507.1 220.0,503.0 C228.7,498.9 242.2,491.3 250.0,486.0 C257.8,480.7 264.2,473.5 267.0,471.0" stroke="#e4628a" stroke-width="8" filter="url(#b3)" opacity="0.6" fill="none"/>
<path d="M212.0,420.0 C209.2,425.0 199.0,440.8 195.0,450.0 C191.0,459.2 187.2,468.7 188.0,475.0 C188.8,481.3 198.0,485.8 200.0,488.0" stroke="#f8aec2" stroke-width="20" filter="url(#b5)" opacity="0.75" fill="none"/>
<path d="M232.0,372.0 C227.5,375.3 212.7,384.3 205.0,392.0 C197.3,399.7 189.2,413.7 186.0,418.0" stroke="#e2587e" stroke-width="6" filter="url(#b3)" opacity="0.7" fill="none"/>
</g>
<path d="M245.0,370.0 C241.1,371.0 228.3,371.8 221.5,376.0 C214.7,380.2 209.4,388.5 204.0,395.0 C198.6,401.5 193.0,409.2 189.0,415.0 C185.0,420.8 183.2,425.3 180.0,430.0 C176.8,434.7 172.8,438.8 170.0,443.0 C167.2,447.2 165.0,451.2 163.0,455.0 C161.0,458.8 159.2,462.2 158.0,466.0 C156.8,469.8 156.1,473.8 156.0,478.0 C155.9,482.2 156.3,487.0 157.5,491.0 C158.7,495.0 160.4,499.0 163.0,502.0 C165.6,505.0 169.3,507.5 173.0,509.0 C176.7,510.5 180.8,510.8 185.0,511.0 C189.2,511.2 192.2,511.5 198.0,510.0 C203.8,508.5 211.3,506.2 220.0,502.0 C228.7,497.8 242.2,490.3 250.0,485.0 C257.8,479.7 261.7,475.0 267.0,470.0 C272.3,465.0 276.5,461.7 282.0,455.0 C287.5,448.3 297.0,434.2 300.0,430.0 C300.0,420.3 300.0,381.7 300.0,372.0 C290.8,371.7 254.2,370.3 245.0,370.0Z" fill="none" stroke="#9c3c54" stroke-width="0.8"/>
<path d="M300.0,390.0 C298.3,398.3 291.7,431.7 290.0,440.0 C288.3,443.0 283.8,452.7 280.0,458.0 C276.2,463.3 270.3,466.3 267.0,472.0 C263.7,477.7 262.4,486.2 260.0,492.0 C257.6,497.8 254.5,502.2 252.5,507.0 C250.5,511.8 248.7,516.5 248.0,521.0 C247.3,525.5 247.5,530.0 248.5,534.0 C249.5,538.0 251.4,542.0 254.0,545.0 C256.6,548.0 260.0,550.2 264.0,552.0 C268.0,553.8 272.7,554.8 278.0,555.5 C283.3,556.2 289.8,556.9 296.0,556.0 C302.2,555.1 306.0,553.5 315.0,550.0 C324.0,546.5 335.8,541.3 350.0,535.0 C364.2,528.7 385.0,517.8 400.0,512.0 C415.0,506.2 428.3,503.3 440.0,500.0 C451.7,496.7 465.0,493.3 470.0,492.0 C468.5,488.3 464.8,477.8 461.0,470.0 C457.2,462.2 449.8,449.2 447.5,445.0 C445.6,444.7 439.8,443.2 436.0,443.0 C432.2,442.8 426.8,443.8 425.0,444.0 C420.8,445.3 404.7,450.8 400.0,452.0 C395.3,453.2 397.5,451.2 397.0,451.0 C399.2,449.5 405.8,445.8 410.0,442.0 C414.2,438.2 420.0,430.3 422.0,428.0 C423.3,421.7 428.7,396.3 430.0,390.0 C408.3,390.0 321.7,390.0 300.0,390.0Z" fill="#f594ad"/>
<g clip-path="url(#cR)">
<path d="M280.0,458.0 C277.8,460.3 270.3,466.3 267.0,472.0 C263.7,477.7 262.4,486.2 260.0,492.0 C257.6,497.8 254.5,502.2 252.5,507.0 C250.5,511.8 248.7,516.5 248.0,521.0 C247.3,525.5 247.5,530.0 248.5,534.0 C249.5,538.0 251.4,542.0 254.0,545.0 C256.6,548.0 260.0,550.2 264.0,552.0 C268.0,553.8 272.7,555.2 278.0,556.0 C283.3,556.8 289.8,557.4 296.0,556.5 C302.2,555.6 306.0,554.0 315.0,550.5 C324.0,547.0 335.8,541.8 350.0,535.5 C364.2,529.2 385.0,518.3 400.0,512.5 C415.0,506.7 428.3,503.8 440.0,500.5 C451.7,497.2 465.0,493.8 470.0,492.5" stroke="#e4628a" stroke-width="8" filter="url(#b3)" opacity="0.6" fill="none"/>
<path d="M330.0,440.0 C325.0,445.0 308.3,459.2 300.0,470.0 C291.7,480.8 282.5,495.0 280.0,505.0 C277.5,515.0 284.2,525.8 285.0,530.0" stroke="#f8aec2" stroke-width="22" filter="url(#b5)" opacity="0.75" fill="none"/>
<path d="M340.0,500.0 C346.7,498.0 366.7,492.7 380.0,488.0 C393.3,483.3 413.3,474.7 420.0,472.0" stroke="#f8aabf" stroke-width="16" filter="url(#b5)" opacity="0.6" fill="none"/>
<path d="M300.0,483.0 C304.2,482.0 314.7,480.8 325.0,477.0 C335.3,473.2 349.5,464.2 362.0,460.0 C374.5,455.8 393.7,453.3 400.0,452.0" stroke="#de5479" stroke-width="5" filter="url(#b2)" opacity="0.7" fill="none"/>
<path d="M447.0,446.0 C448.8,449.7 454.2,460.3 458.0,468.0 C461.8,475.7 468.0,488.0 470.0,492.0" stroke="#e04a74" stroke-width="7" filter="url(#b2)" opacity="0.8" fill="none"/>
<path d="M395.0,450.0 C397.2,448.7 403.8,445.3 408.0,442.0 C412.2,438.7 418.0,432.0 420.0,430.0" stroke="#e2587e" stroke-width="6" filter="url(#b2)" opacity="0.7" fill="none"/>
</g>
<path d="M300.0,390.0 C298.3,398.3 291.7,431.7 290.0,440.0 C288.3,443.0 283.8,452.7 280.0,458.0 C276.2,463.3 270.3,466.3 267.0,472.0 C263.7,477.7 262.4,486.2 260.0,492.0 C257.6,497.8 254.5,502.2 252.5,507.0 C250.5,511.8 248.7,516.5 248.0,521.0 C247.3,525.5 247.5,530.0 248.5,534.0 C249.5,538.0 251.4,542.0 254.0,545.0 C256.6,548.0 260.0,550.2 264.0,552.0 C268.0,553.8 272.7,554.8 278.0,555.5 C283.3,556.2 289.8,556.9 296.0,556.0 C302.2,555.1 306.0,553.5 315.0,550.0 C324.0,546.5 335.8,541.3 350.0,535.0 C364.2,528.7 385.0,517.8 400.0,512.0 C415.0,506.2 428.3,503.3 440.0,500.0 C451.7,496.7 465.0,493.3 470.0,492.0 C468.5,488.3 464.8,477.8 461.0,470.0 C457.2,462.2 449.8,449.2 447.5,445.0 C445.6,444.7 439.8,443.2 436.0,443.0 C432.2,442.8 426.8,443.8 425.0,444.0 C420.8,445.3 404.7,450.8 400.0,452.0 C395.3,453.2 397.5,451.2 397.0,451.0 C399.2,449.5 405.8,445.8 410.0,442.0 C414.2,438.2 420.0,430.3 422.0,428.0 C423.3,421.7 428.7,396.3 430.0,390.0 C408.3,390.0 321.7,390.0 300.0,390.0Z" fill="none" stroke="#9c3c54" stroke-width="0.8"/>
<g fill="none" stroke="#a8405c" stroke-width="0.8" stroke-linecap="round">
<path d="M397.0,451.0 C391.2,452.6 374.0,456.2 362.0,460.5 C350.0,464.8 335.3,473.3 325.0,477.0 C314.7,480.7 305.8,481.7 300.0,482.5 C294.2,483.3 291.7,482.1 290.0,482.0" fill="none"/>
<path d="M220.0,411.0 C215.8,413.5 201.7,420.3 195.0,426.0 C188.3,431.7 183.8,438.9 180.0,445.0 C176.2,451.1 173.8,459.6 172.5,462.5" fill="none"/>
<path d="M428.0,460.0 C429.2,461.3 433.3,464.7 435.0,468.0 C436.7,471.3 437.5,478.0 438.0,480.0" fill="none"/>
<path d="M441.0,484.0 C442.0,485.0 445.7,488.2 447.0,490.0 C448.3,491.8 448.7,494.2 449.0,495.0" fill="none"/>
<path d="M317.0,400.0 C316.7,402.3 316.8,409.0 315.0,414.0 C313.2,419.0 309.2,424.8 306.0,430.0 C302.8,435.2 297.7,442.5 296.0,445.0" fill="none"/>
</g>
<clipPath id="cT"><path d="M206.0,217.0 C209.5,213.3 223.5,198.7 227.0,195.0 C231.5,191.3 249.5,176.7 254.0,173.0 C255.8,172.7 263.2,171.3 265.0,171.0 C271.3,172.4 296.7,178.1 303.0,179.5 C305.0,178.9 313.0,176.6 315.0,176.0 C319.5,173.2 337.5,161.8 342.0,159.0 C345.8,159.2 357.9,159.5 365.0,160.0 C372.1,160.5 378.8,159.8 384.5,162.0 C390.2,164.2 394.9,168.0 399.5,173.0 C404.1,178.0 408.7,185.5 412.0,192.0 C415.3,198.5 417.7,205.7 419.5,212.0 C421.3,218.3 422.0,223.0 423.0,230.0 C424.0,237.0 425.1,250.0 425.5,254.0 C425.4,282.7 425.1,397.3 425.0,426.0 C412.2,426.0 360.8,426.0 348.0,426.0 C348.0,424.7 348.0,419.3 348.0,418.0 C346.0,415.3 339.3,406.7 336.0,402.0 C332.7,397.3 330.0,392.8 328.0,390.0 C326.0,387.2 324.7,385.8 324.0,385.0 C323.0,386.2 321.0,388.5 318.0,392.0 C315.0,395.5 309.7,400.3 306.0,406.0 C302.3,411.7 298.7,420.3 296.0,426.0 C293.3,431.7 291.0,437.7 290.0,440.0 C289.3,439.3 287.3,438.3 286.0,436.0 C284.7,433.7 282.7,427.7 282.0,426.0 C283.2,421.7 287.8,404.3 289.0,400.0 C277.8,399.7 233.2,398.3 222.0,398.0 C221.9,395.8 221.8,389.7 221.5,385.0 C221.2,380.3 220.9,375.0 220.5,370.0 C220.1,365.0 219.8,360.0 219.0,355.0 C218.2,350.0 217.3,345.8 216.0,340.0 C214.7,334.2 212.6,326.7 211.0,320.0 C209.4,313.3 208.0,307.5 206.7,300.0 C205.4,292.5 203.8,282.0 203.0,275.0 C202.2,268.0 201.8,265.0 201.7,258.0 C201.6,251.0 201.8,239.8 202.5,233.0 C203.2,226.2 205.4,219.7 206.0,217.0Z"/></clipPath>
<path d="M206.0,217.0 C209.5,213.3 223.5,198.7 227.0,195.0 C231.5,191.3 249.5,176.7 254.0,173.0 C255.8,172.7 263.2,171.3 265.0,171.0 C271.3,172.4 296.7,178.1 303.0,179.5 C305.0,178.9 313.0,176.6 315.0,176.0 C319.5,173.2 337.5,161.8 342.0,159.0 C345.8,159.2 357.9,159.5 365.0,160.0 C372.1,160.5 378.8,159.8 384.5,162.0 C390.2,164.2 394.9,168.0 399.5,173.0 C404.1,178.0 408.7,185.5 412.0,192.0 C415.3,198.5 417.7,205.7 419.5,212.0 C421.3,218.3 422.0,223.0 423.0,230.0 C424.0,237.0 425.1,250.0 425.5,254.0 C425.4,282.7 425.1,397.3 425.0,426.0 C412.2,426.0 360.8,426.0 348.0,426.0 C348.0,424.7 348.0,419.3 348.0,418.0 C346.0,415.3 339.3,406.7 336.0,402.0 C332.7,397.3 330.0,392.8 328.0,390.0 C326.0,387.2 324.7,385.8 324.0,385.0 C323.0,386.2 321.0,388.5 318.0,392.0 C315.0,395.5 309.7,400.3 306.0,406.0 C302.3,411.7 298.7,420.3 296.0,426.0 C293.3,431.7 291.0,437.7 290.0,440.0 C289.3,439.3 287.3,438.3 286.0,436.0 C284.7,433.7 282.7,427.7 282.0,426.0 C283.2,421.7 287.8,404.3 289.0,400.0 C277.8,399.7 233.2,398.3 222.0,398.0 C221.9,395.8 221.8,389.7 221.5,385.0 C221.2,380.3 220.9,375.0 220.5,370.0 C220.1,365.0 219.8,360.0 219.0,355.0 C218.2,350.0 217.3,345.8 216.0,340.0 C214.7,334.2 212.6,326.7 211.0,320.0 C209.4,313.3 208.0,307.5 206.7,300.0 C205.4,292.5 203.8,282.0 203.0,275.0 C202.2,268.0 201.8,265.0 201.7,258.0 C201.6,251.0 201.8,239.8 202.5,233.0 C203.2,226.2 205.4,219.7 206.0,217.0Z" fill="#f69bb2"/>
<g clip-path="url(#cT)">
<path d="M250.0,308.0 C253.3,310.0 262.5,316.7 270.0,320.0 C277.5,323.3 286.3,327.3 295.0,328.0 C303.7,328.7 313.3,326.7 322.0,324.0 C330.7,321.3 342.8,314.0 347.0,312.0" stroke="#e9688b" stroke-width="20" filter="url(#b5)" opacity="0.6" fill="none"/>
<path d="M206.0,217.0 C205.4,219.7 203.2,226.2 202.5,233.0 C201.8,239.8 201.6,251.0 201.7,258.0 C201.8,265.0 202.2,268.0 203.0,275.0 C203.8,282.0 205.4,292.5 206.7,300.0 C208.0,307.5 209.4,313.3 211.0,320.0 C212.6,326.7 214.7,334.2 216.0,340.0 C217.3,345.8 218.2,350.0 219.0,355.0 C219.8,360.0 220.1,365.0 220.5,370.0 C220.9,375.0 221.2,380.3 221.5,385.0 C221.8,389.7 221.9,395.8 222.0,398.0" stroke="#e05a80" stroke-width="7" filter="url(#b2)" opacity="0.46" fill="none"/>
<path d="M262.0,300.0 C263.7,302.2 268.0,309.5 272.0,313.0 C276.0,316.5 281.2,320.5 286.0,321.0 C290.8,321.5 296.7,318.7 301.0,316.0 C305.3,313.3 310.2,306.8 312.0,305.0" stroke="#e45c82" stroke-width="8" filter="url(#b3)" opacity="0.5" fill="none"/>
<path d="M266.0,312.0 C267.3,316.7 271.3,330.3 274.0,340.0 C276.7,349.7 279.8,360.0 282.0,370.0 C284.2,380.0 286.2,395.0 287.0,400.0" stroke="#e66488" stroke-width="6" filter="url(#b2)" opacity="0.4" fill="none"/>
<path d="M240.0,215.0 C242.7,216.2 250.7,217.3 256.0,222.0 C261.3,226.7 266.7,236.3 272.0,243.0 C277.3,249.7 285.3,258.8 288.0,262.0" stroke="#e66488" stroke-width="5" filter="url(#b2)" opacity="0.34" fill="none"/>
<path d="M352.0,186.0 C354.2,188.8 360.3,196.7 365.0,203.0 C369.7,209.3 374.5,216.2 380.0,224.0 C385.5,231.8 395.0,245.7 398.0,250.0" stroke="#ea6c8e" stroke-width="5" filter="url(#b2)" opacity="0.37" fill="none"/>
<path d="M290.0,262.0 C290.7,265.8 291.5,277.2 294.0,285.0 C296.5,292.8 301.7,299.8 305.0,309.0 C308.3,318.2 312.0,329.8 314.0,340.0 C316.0,350.2 316.3,361.3 317.0,370.0 C317.7,378.7 317.8,388.3 318.0,392.0" stroke="#e66488" stroke-width="4" filter="url(#b2)" opacity="0.31" fill="none"/>
<path d="M262.0,240.0 C263.0,243.7 265.0,255.0 268.0,262.0 C271.0,269.0 275.3,277.0 280.0,282.0 C284.7,287.0 293.3,290.3 296.0,292.0" stroke="#fbbccb" stroke-width="16" filter="url(#b5)" opacity="0.53" fill="none"/>
<path d="M372.0,178.0 C375.0,181.7 385.0,191.3 390.0,200.0 C395.0,208.7 400.0,225.0 402.0,230.0" stroke="#fbbccb" stroke-width="16" filter="url(#b5)" opacity="0.5" fill="none"/>
<path d="M330.0,250.0 C331.3,254.2 336.3,266.7 338.0,275.0 C339.7,283.3 339.7,295.8 340.0,300.0" stroke="#f9b0c3" stroke-width="12" filter="url(#b5)" opacity="0.37" fill="none"/>
<path d="M240.0,330.0 C241.3,335.0 246.0,350.8 248.0,360.0 C250.0,369.2 251.3,380.8 252.0,385.0" stroke="#fab8c8" stroke-width="12" filter="url(#b5)" opacity="0.5" fill="none"/>
<path d="M214.0,240.0 C214.0,244.2 213.3,256.7 214.0,265.0 C214.7,273.3 217.3,285.8 218.0,290.0" stroke="#f8aabf" stroke-width="7" filter="url(#b3)" opacity="0.43" fill="none"/>
<path d="M300.0,335.0 C300.3,340.0 302.0,355.0 302.0,365.0 C302.0,375.0 300.3,390.0 300.0,395.0" stroke="#fab8c8" stroke-width="12" filter="url(#b5)" opacity="0.34" fill="none"/>
</g>
<path d="M206.0,217.0 C209.5,213.3 223.5,198.7 227.0,195.0 C231.5,191.3 249.5,176.7 254.0,173.0 C255.8,172.7 263.2,171.3 265.0,171.0 C271.3,172.4 296.7,178.1 303.0,179.5 C305.0,178.9 313.0,176.6 315.0,176.0 C319.5,173.2 337.5,161.8 342.0,159.0 C345.8,159.2 357.9,159.5 365.0,160.0 C372.1,160.5 378.8,159.8 384.5,162.0 C390.2,164.2 394.9,168.0 399.5,173.0 C404.1,178.0 408.7,185.5 412.0,192.0 C415.3,198.5 417.7,205.7 419.5,212.0 C421.3,218.3 422.0,223.0 423.0,230.0 C424.0,237.0 425.1,250.0 425.5,254.0 C425.4,282.7 425.1,397.3 425.0,426.0 C412.2,426.0 360.8,426.0 348.0,426.0 C348.0,424.7 348.0,419.3 348.0,418.0 C346.0,415.3 339.3,406.7 336.0,402.0 C332.7,397.3 330.0,392.8 328.0,390.0 C326.0,387.2 324.7,385.8 324.0,385.0 C323.0,386.2 321.0,388.5 318.0,392.0 C315.0,395.5 309.7,400.3 306.0,406.0 C302.3,411.7 298.7,420.3 296.0,426.0 C293.3,431.7 291.0,437.7 290.0,440.0 C289.3,439.3 287.3,438.3 286.0,436.0 C284.7,433.7 282.7,427.7 282.0,426.0 C283.2,421.7 287.8,404.3 289.0,400.0 C277.8,399.7 233.2,398.3 222.0,398.0 C221.9,395.8 221.8,389.7 221.5,385.0 C221.2,380.3 220.9,375.0 220.5,370.0 C220.1,365.0 219.8,360.0 219.0,355.0 C218.2,350.0 217.3,345.8 216.0,340.0 C214.7,334.2 212.6,326.7 211.0,320.0 C209.4,313.3 208.0,307.5 206.7,300.0 C205.4,292.5 203.8,282.0 203.0,275.0 C202.2,268.0 201.8,265.0 201.7,258.0 C201.6,251.0 201.8,239.8 202.5,233.0 C203.2,226.2 205.4,219.7 206.0,217.0Z" fill="none" stroke="#a04660" stroke-width="0.8"/>
<path d="M324.0,385.0 C323.4,386.0 321.1,390.0 320.5,391.0 C321.8,391.0 327.2,391.0 328.5,391.0 C327.8,390.0 324.8,386.0 324.0,385.0Z" fill="#fde0cc" stroke="#a04660" stroke-width="0.6"/>
<path d="M319.0,391.5 C318.7,392.9 317.3,398.6 317.0,400.0 C320.0,400.2 332.0,400.8 335.0,401.0 C334.0,399.4 330.0,393.1 329.0,391.5 C327.3,391.5 320.7,391.5 319.0,391.5Z" fill="#ee7896" stroke="#a04660" stroke-width="0.6"/>
<g fill="none" stroke="#93405a" stroke-width="0.9" stroke-linecap="round" stroke-linejoin="round">
<path d="M252.0,175.6 C250.9,178.8 247.8,188.1 245.5,195.0 C243.2,201.9 239.5,213.2 238.3,216.8 C240.6,214.5 247.6,207.1 252.0,203.0 C256.4,198.9 262.8,193.8 264.9,192.0" fill="none"/>
<path d="M259.4,202.0 C258.8,205.1 256.3,217.4 255.7,220.5 C258.4,223.9 266.4,234.0 272.0,241.0 C277.6,248.0 286.7,259.0 289.6,262.6" fill="none"/>
<path d="M238.3,216.8 C237.7,217.7 235.1,221.1 234.5,222.0" fill="none"/>
<path d="M303.4,178.3 C304.5,181.9 308.5,193.3 310.0,200.0 C311.5,206.7 312.1,215.5 312.5,218.6 C311.2,219.8 307.2,223.9 305.0,226.0 C302.8,228.1 300.4,230.2 299.5,231.0" fill="none"/>
<path d="M312.5,218.6 C310.8,222.2 305.7,232.8 302.0,240.0 C298.3,247.2 292.4,258.3 290.5,262.0" fill="none"/>
<path d="M289.0,256.0 C289.1,258.3 288.7,264.3 289.5,270.0 C290.3,275.7 291.6,283.3 294.0,290.0 C296.4,296.7 301.2,303.8 304.0,310.0 C306.8,316.2 309.0,320.4 311.0,327.5 C313.0,334.6 314.7,344.6 316.0,352.5 C317.3,360.4 317.7,369.4 319.0,375.0 C320.3,380.6 323.2,384.2 324.0,386.0" fill="none"/>
<path d="M258.0,305.0 C259.5,306.1 263.7,309.4 267.0,311.5 C270.3,313.6 274.2,315.7 278.0,317.5 C281.8,319.3 288.0,321.7 290.0,322.5" fill="none"/>
<path d="M312.0,319.0 C312.8,318.8 315.3,318.2 317.0,317.5 C318.7,316.8 321.2,315.4 322.0,315.0" stroke="#e0506e" fill="none"/>
<path d="M275.0,340.0 C275.8,345.0 278.5,361.7 280.0,370.0 C281.5,378.3 282.8,383.7 284.0,390.0 C285.2,396.3 286.5,405.0 287.0,408.0" fill="none"/>
<path d="M350.6,185.0 C351.7,186.2 354.6,189.2 357.0,192.0 C359.4,194.8 361.2,196.8 365.0,202.0 C368.8,207.2 374.5,215.0 380.0,223.0 C385.5,231.0 395.0,245.5 398.0,250.0" fill="none"/>
<path d="M354.0,180.0 C354.3,181.3 355.5,185.3 356.0,188.0 C356.5,190.7 356.8,194.7 357.0,196.0" fill="none"/>
<path d="M224.5,396.0 C227.9,395.9 238.2,396.0 245.0,395.5 C251.8,395.0 258.7,393.9 265.0,393.0 C271.3,392.1 280.0,390.5 283.0,390.0" fill="none"/>
<path d="M280.0,350.0 C281.2,352.0 284.8,357.8 287.0,362.0 C289.2,366.2 292.0,372.8 293.0,375.0" fill="none"/>
<path d="M232.0,360.0 C231.8,364.2 231.3,379.0 231.0,385.0 C230.7,391.0 230.2,394.2 230.0,396.0" fill="none"/>
</g>
<clipPath id="cCh"><path d="M265.0,168.0 C265.4,171.1 265.4,179.9 267.4,186.5 C269.4,193.1 274.4,200.6 277.0,207.5 C279.6,214.4 281.0,220.2 283.0,228.0 C285.0,235.8 288.0,249.7 289.0,254.0 C289.9,249.2 293.0,232.2 294.5,225.0 C296.0,217.8 297.1,216.2 298.0,211.0 C298.9,205.8 298.9,198.8 299.8,193.5 C300.6,188.2 302.5,181.8 303.0,179.5 C304.8,176.2 312.2,163.2 314.0,160.0 C306.7,160.0 277.3,160.0 270.0,160.0 C269.2,161.3 265.8,166.7 265.0,168.0Z"/></clipPath>
<path d="M265.0,168.0 C265.4,171.1 265.4,179.9 267.4,186.5 C269.4,193.1 274.4,200.6 277.0,207.5 C279.6,214.4 281.0,220.2 283.0,228.0 C285.0,235.8 288.0,249.7 289.0,254.0 C289.9,249.2 293.0,232.2 294.5,225.0 C296.0,217.8 297.1,216.2 298.0,211.0 C298.9,205.8 298.9,198.8 299.8,193.5 C300.6,188.2 302.5,181.8 303.0,179.5 C304.8,176.2 312.2,163.2 314.0,160.0 C306.7,160.0 277.3,160.0 270.0,160.0 C269.2,161.3 265.8,166.7 265.0,168.0Z" fill="#fee8d8"/>
<g clip-path="url(#cCh)">
<path d="M264.0,168.0 C265.8,168.7 270.7,171.3 275.0,172.0 C279.3,172.7 285.2,171.2 290.0,172.0 C294.8,172.8 301.7,176.2 304.0,177.0" stroke="#f1c6a8" stroke-width="7" filter="url(#b2)" opacity="0.7" fill="none"/>
<path d="M283.0,228.0 C283.8,232.0 287.2,248.0 288.0,252.0" stroke="#edbf9e" stroke-width="5" filter="url(#b2)" opacity="0.8" fill="none"/>
<path d="M296.0,200.0 C295.7,203.7 294.3,218.3 294.0,222.0" stroke="#f3cdb2" stroke-width="5" filter="url(#b2)" opacity="0.7" fill="none"/>
</g>
<path d="M265.0,168.0 C265.4,171.1 265.4,179.9 267.4,186.5 C269.4,193.1 274.4,200.6 277.0,207.5 C279.6,214.4 281.0,220.2 283.0,228.0 C285.0,235.8 288.0,249.7 289.0,254.0 C289.9,249.2 293.0,232.2 294.5,225.0 C296.0,217.8 297.1,216.2 298.0,211.0 C298.9,205.8 298.9,198.8 299.8,193.5 C300.6,188.2 302.5,181.8 303.0,179.5 C304.8,176.2 312.2,163.2 314.0,160.0 C306.7,160.0 277.3,160.0 270.0,160.0 C269.2,161.3 265.8,166.7 265.0,168.0Z" fill="none" stroke="#8a4040" stroke-width="0.7"/>
<path d="M288.0,240.0 C288.1,242.2 288.4,250.8 288.5,253.0" stroke="#8a4040" stroke-width="0.7" fill="none"/>
<path d="M265.0,171.0 C264.7,172.2 263.3,176.8 263.0,178.0 C263.7,179.7 266.7,186.3 267.4,188.0 C267.8,187.7 269.6,186.3 270.0,186.0 C270.1,183.7 270.4,174.3 270.5,172.0 C269.6,171.8 265.9,171.2 265.0,171.0Z" fill="#f9a9bd" stroke="#a04660" stroke-width="0.6"/>
<path d="M222.0,414.0 C222.5,415.5 223.5,420.8 225.0,423.0 C226.5,425.2 226.8,426.0 231.0,427.0 C235.2,428.0 242.8,429.0 250.0,429.0 C257.2,429.0 269.0,427.7 274.0,427.0 C279.0,426.3 277.8,426.5 280.0,425.0 C282.2,423.5 286.2,419.2 287.5,418.0 C287.5,416.3 287.5,409.7 287.5,408.0 C284.6,407.7 275.6,406.3 270.0,406.0 C264.4,405.7 259.7,405.5 254.0,406.0 C248.3,406.5 241.3,407.7 236.0,409.0 C230.7,410.3 224.3,413.2 222.0,414.0Z" fill="#e56d8e" stroke="#a04660" stroke-width="0.8"/>
<clipPath id="cH"><path d="M236.0,408.0 C235.3,411.0 233.2,419.7 232.0,426.0 C230.8,432.3 229.3,440.3 229.0,446.0 C228.7,451.7 229.4,456.3 230.0,460.0 C230.6,463.7 231.5,465.9 232.5,468.0 C233.5,470.1 234.8,471.9 236.0,472.5 C237.2,473.1 238.8,472.8 239.5,471.5 C240.2,470.2 240.2,466.1 240.3,465.0 C240.4,466.0 240.4,469.3 241.0,471.0 C241.6,472.7 242.9,474.7 244.0,475.0 C245.1,475.3 246.8,474.5 247.5,473.0 C248.2,471.5 248.2,467.2 248.3,466.0 C248.5,467.2 248.7,471.2 249.5,473.0 C250.3,474.8 251.8,476.8 253.0,477.0 C254.2,477.2 255.7,476.2 256.5,474.0 C257.3,471.8 257.5,465.7 257.7,464.0 C257.8,464.7 257.9,467.2 258.5,468.0 C259.1,468.8 260.2,470.0 261.0,469.0 C261.8,468.0 262.8,464.8 263.5,462.0 C264.2,459.2 264.2,456.0 265.0,452.0 C265.8,448.0 267.2,443.0 268.0,438.0 C268.8,433.0 269.7,427.3 270.0,422.0 C270.3,416.7 270.0,408.7 270.0,406.0 C264.3,406.3 241.7,407.7 236.0,408.0Z"/></clipPath>
<path d="M236.0,408.0 C235.3,411.0 233.2,419.7 232.0,426.0 C230.8,432.3 229.3,440.3 229.0,446.0 C228.7,451.7 229.4,456.3 230.0,460.0 C230.6,463.7 231.5,465.9 232.5,468.0 C233.5,470.1 234.8,471.9 236.0,472.5 C237.2,473.1 238.8,472.8 239.5,471.5 C240.2,470.2 240.2,466.1 240.3,465.0 C240.4,466.0 240.4,469.3 241.0,471.0 C241.6,472.7 242.9,474.7 244.0,475.0 C245.1,475.3 246.8,474.5 247.5,473.0 C248.2,471.5 248.2,467.2 248.3,466.0 C248.5,467.2 248.7,471.2 249.5,473.0 C250.3,474.8 251.8,476.8 253.0,477.0 C254.2,477.2 255.7,476.2 256.5,474.0 C257.3,471.8 257.5,465.7 257.7,464.0 C257.8,464.7 257.9,467.2 258.5,468.0 C259.1,468.8 260.2,470.0 261.0,469.0 C261.8,468.0 262.8,464.8 263.5,462.0 C264.2,459.2 264.2,456.0 265.0,452.0 C265.8,448.0 267.2,443.0 268.0,438.0 C268.8,433.0 269.7,427.3 270.0,422.0 C270.3,416.7 270.0,408.7 270.0,406.0 C264.3,406.3 241.7,407.7 236.0,408.0Z" fill="#fde2cc"/>
<g clip-path="url(#cH)">
<path d="M236.0,410.0 C235.2,413.3 232.2,423.3 231.0,430.0 C229.8,436.7 228.5,444.2 228.8,450.0 C229.0,455.8 231.0,461.2 232.5,465.0 C234.0,468.8 236.7,471.7 237.5,473.0" stroke="#f0c4a0" stroke-width="5" filter="url(#b2)" opacity="0.7" fill="none"/>
<path d="M268.0,410.0 C268.0,413.3 268.7,422.5 268.0,430.0 C267.3,437.5 265.7,448.3 264.0,455.0 C262.3,461.7 259.0,467.5 258.0,470.0" stroke="#f0c4a0" stroke-width="4" filter="url(#b2)" opacity="0.6" fill="none"/>
<path d="M236.0,412.0 C238.7,412.3 246.3,414.2 252.0,414.0 C257.7,413.8 267.0,411.5 270.0,411.0" stroke="#eeb894" stroke-width="5" filter="url(#b2)" opacity="0.6" fill="none"/>
</g>
<path d="M236.0,408.0 C235.3,411.0 233.2,419.7 232.0,426.0 C230.8,432.3 229.3,440.3 229.0,446.0 C228.7,451.7 229.4,456.3 230.0,460.0 C230.6,463.7 231.5,465.9 232.5,468.0 C233.5,470.1 234.8,471.9 236.0,472.5 C237.2,473.1 238.8,472.8 239.5,471.5 C240.2,470.2 240.2,466.1 240.3,465.0 C240.4,466.0 240.4,469.3 241.0,471.0 C241.6,472.7 242.9,474.7 244.0,475.0 C245.1,475.3 246.8,474.5 247.5,473.0 C248.2,471.5 248.2,467.2 248.3,466.0 C248.5,467.2 248.7,471.2 249.5,473.0 C250.3,474.8 251.8,476.8 253.0,477.0 C254.2,477.2 255.7,476.2 256.5,474.0 C257.3,471.8 257.5,465.7 257.7,464.0 C257.8,464.7 257.9,467.2 258.5,468.0 C259.1,468.8 260.2,470.0 261.0,469.0 C261.8,468.0 262.8,464.8 263.5,462.0 C264.2,459.2 264.2,456.0 265.0,452.0 C265.8,448.0 267.2,443.0 268.0,438.0 C268.8,433.0 269.7,427.3 270.0,422.0 C270.3,416.7 270.0,408.7 270.0,406.0 C264.3,406.3 241.7,407.7 236.0,408.0Z" fill="none" stroke="#7a3a20" stroke-width="0.8"/>
<g fill="none" stroke="#9a5434" stroke-width="0.8" stroke-linecap="round">
<path d="M240.3,465.0 C240.1,463.3 239.3,458.3 238.8,455.0 C238.3,451.7 237.7,446.7 237.5,445.0" fill="none"/>
<path d="M248.3,466.0 C248.1,464.0 247.4,457.9 247.0,454.0 C246.6,450.1 246.2,444.4 246.0,442.5" fill="none"/>
<path d="M257.7,464.0 C257.8,461.7 258.1,454.4 258.3,450.0 C258.5,445.6 258.7,439.6 258.8,437.5" fill="none"/>
</g>
<path d="M270.5,408.0 C269.7,410.2 271.2,416.7 272.0,420.0 C272.8,423.3 273.9,427.0 275.0,428.0 C276.1,429.0 277.8,428.0 278.5,426.0 C279.2,424.0 279.2,419.2 279.0,416.0 C278.8,412.8 278.4,408.3 277.0,407.0 C275.6,405.7 271.3,405.8 270.5,408.0Z" fill="#fbd6bc" stroke="#7a3a20" stroke-width="0.7"/>
<clipPath id="cC"><path d="M222.0,394.0 C222.0,397.5 222.0,411.5 222.0,415.0 C224.3,414.3 230.7,412.2 236.0,411.0 C241.3,409.8 248.3,408.5 254.0,408.0 C259.7,407.5 264.4,407.8 270.0,408.0 C275.6,408.2 284.6,408.8 287.5,409.0 C286.9,405.5 284.6,391.5 284.0,388.0 C281.7,388.3 274.3,389.7 270.0,390.0 C265.7,390.3 263.0,389.5 258.0,390.0 C253.0,390.5 246.0,392.3 240.0,393.0 C234.0,393.7 225.0,393.8 222.0,394.0Z"/></clipPath>
<path d="M222.0,394.0 C222.0,397.5 222.0,411.5 222.0,415.0 C224.3,414.3 230.7,412.2 236.0,411.0 C241.3,409.8 248.3,408.5 254.0,408.0 C259.7,407.5 264.4,407.8 270.0,408.0 C275.6,408.2 284.6,408.8 287.5,409.0 C286.9,405.5 284.6,391.5 284.0,388.0 C281.7,388.3 274.3,389.7 270.0,390.0 C265.7,390.3 263.0,389.5 258.0,390.0 C253.0,390.5 246.0,392.3 240.0,393.0 C234.0,393.7 225.0,393.8 222.0,394.0Z" fill="#f595ae"/>
<g clip-path="url(#cC)">
<path d="M222.0,415.0 C224.3,414.3 230.7,412.2 236.0,411.0 C241.3,409.8 248.3,408.5 254.0,408.0 C259.7,407.5 264.5,407.8 270.0,408.0 C275.5,408.2 284.2,408.8 287.0,409.0" stroke="#e66488" stroke-width="4" filter="url(#b2)" opacity="0.6" fill="none"/>
<path d="M222.0,396.0 C222.0,399.2 222.0,411.8 222.0,415.0" stroke="#e05a80" stroke-width="6" filter="url(#b2)" opacity="0.7" fill="none"/>
</g>
<path d="M222.0,394.0 C222.0,397.5 222.0,411.5 222.0,415.0 C224.3,414.3 230.7,412.2 236.0,411.0 C241.3,409.8 248.3,408.5 254.0,408.0 C259.7,407.5 264.4,407.8 270.0,408.0 C275.6,408.2 284.6,408.8 287.5,409.0 C286.9,405.5 284.6,391.5 284.0,388.0 C281.7,388.3 274.3,389.7 270.0,390.0 C265.7,390.3 263.0,389.5 258.0,390.0 C253.0,390.5 246.0,392.3 240.0,393.0 C234.0,393.7 225.0,393.8 222.0,394.0Z" fill="none" stroke="#a04660" stroke-width="0.8"/>
<path d="M225.0,396.0 C227.5,395.4 234.5,393.5 240.0,392.5 C245.5,391.5 251.3,390.1 258.0,390.0 C264.7,389.9 276.3,391.7 280.0,392.0" stroke="#a84a64" stroke-width="0.8" fill="none"/>
<clipPath id="cF"><path d="M200.0,31.0 C202.7,33.2 213.3,41.8 216.0,44.0 C216.8,43.8 220.2,43.2 221.0,43.0 C221.5,42.0 223.5,38.0 224.0,37.0 C225.3,40.2 230.7,52.8 232.0,56.0 C243.3,56.0 288.7,56.0 300.0,56.0 C300.7,60.0 303.5,71.8 304.0,80.0 C304.5,88.2 302.3,97.3 303.0,105.0 C303.7,112.7 308.5,118.5 308.0,126.0 C307.5,133.5 305.2,144.0 300.0,150.0 C294.8,156.0 282.6,159.1 277.0,162.0 C271.4,164.9 270.6,166.3 266.5,167.5 C262.4,168.7 257.8,169.6 252.5,169.0 C247.2,168.4 240.8,166.3 235.0,164.0 C229.2,161.7 223.3,158.5 217.5,155.0 C211.7,151.5 204.6,148.2 200.0,143.0 C195.4,137.8 192.3,130.5 190.0,124.0 C187.7,117.5 186.8,109.7 186.0,104.0 C185.2,98.3 184.8,93.8 185.0,90.0 C185.2,86.2 186.7,82.5 187.0,81.0 C188.1,78.5 192.4,68.5 193.5,66.0 C194.6,60.2 198.9,36.8 200.0,31.0Z"/></clipPath>
<path d="M200.0,31.0 C202.7,33.2 213.3,41.8 216.0,44.0 C216.8,43.8 220.2,43.2 221.0,43.0 C221.5,42.0 223.5,38.0 224.0,37.0 C225.3,40.2 230.7,52.8 232.0,56.0 C243.3,56.0 288.7,56.0 300.0,56.0 C300.7,60.0 303.5,71.8 304.0,80.0 C304.5,88.2 302.3,97.3 303.0,105.0 C303.7,112.7 308.5,118.5 308.0,126.0 C307.5,133.5 305.2,144.0 300.0,150.0 C294.8,156.0 282.6,159.1 277.0,162.0 C271.4,164.9 270.6,166.3 266.5,167.5 C262.4,168.7 257.8,169.6 252.5,169.0 C247.2,168.4 240.8,166.3 235.0,164.0 C229.2,161.7 223.3,158.5 217.5,155.0 C211.7,151.5 204.6,148.2 200.0,143.0 C195.4,137.8 192.3,130.5 190.0,124.0 C187.7,117.5 186.8,109.7 186.0,104.0 C185.2,98.3 184.8,93.8 185.0,90.0 C185.2,86.2 186.7,82.5 187.0,81.0 C188.1,78.5 192.4,68.5 193.5,66.0 C194.6,60.2 198.9,36.8 200.0,31.0Z" fill="#ffeee2"/>
<g clip-path="url(#cF)">
<path d="M200.0,34.0 C200.7,38.3 201.7,51.3 204.0,60.0 C206.3,68.7 210.7,78.5 214.0,86.0 C217.3,93.5 220.8,99.2 224.0,105.0 C227.2,110.8 231.5,118.3 233.0,121.0" stroke="#f3c9aa" stroke-width="6" filter="url(#b2)" opacity="0.8" fill="none"/>
<path d="M250.0,60.0 C252.0,60.5 257.0,62.7 262.0,63.0 C267.0,63.3 273.7,62.3 280.0,62.0 C286.3,61.7 296.7,61.2 300.0,61.0" stroke="#f5cfb2" stroke-width="6" filter="url(#b2)" opacity="0.55" fill="none"/>
<path d="M186.0,90.0 C186.3,94.2 186.0,106.7 188.0,115.0 C190.0,123.3 193.2,133.2 198.0,140.0 C202.8,146.8 210.0,151.7 217.0,156.0 C224.0,160.3 232.5,163.8 240.0,166.0 C247.5,168.2 258.3,168.5 262.0,169.0" stroke="#f6d2b8" stroke-width="5" filter="url(#b2)" opacity="0.8" fill="none"/>
<ellipse cx="217" cy="127.5" rx="11" ry="6.5" fill="#f9b4c2" filter="url(#b3)" opacity="0.32"/>
<ellipse cx="280" cy="109" rx="15" ry="8" fill="#f9b4c8" filter="url(#b3)" opacity="0.3"/>
</g>
<path d="M185.0,85.0 C185.2,88.2 185.2,97.5 186.0,104.0 C186.8,110.5 187.7,117.5 190.0,124.0 C192.3,130.5 195.4,137.8 200.0,143.0 C204.6,148.2 211.7,151.5 217.5,155.0 C223.3,158.5 229.2,161.7 235.0,164.0 C240.8,166.3 247.2,168.4 252.5,169.0 C257.8,169.6 262.4,168.7 266.5,167.5 C270.6,166.3 275.2,162.9 277.0,162.0" stroke="#8a4a3a" stroke-width="0.8" fill="none"/>
<clipPath id="cE"><path d="M189.0,111.0 C188.9,109.7 188.8,108.3 189.3,107.0 C189.8,105.7 190.8,104.2 192.0,103.0 C193.2,101.8 195.2,100.7 196.7,99.7 C198.2,98.7 199.6,97.8 201.0,97.0 C202.4,96.2 203.9,95.5 205.3,95.0 C206.7,94.5 207.9,93.8 209.3,94.3 C210.8,94.8 212.6,95.9 214.0,98.0 C215.4,100.1 217.9,104.8 218.0,107.0 C218.1,109.2 216.6,109.7 214.7,111.0 C212.8,112.3 209.4,113.9 206.7,115.0 C204.0,116.1 200.9,117.2 198.7,117.7 C196.5,118.2 194.8,118.2 193.3,117.7 C191.9,117.2 190.7,116.1 190.0,115.0 C189.3,113.9 189.1,112.3 189.0,111.0Z"/></clipPath>
<path d="M189.0,111.0 C188.9,109.7 188.8,108.3 189.3,107.0 C189.8,105.7 190.8,104.2 192.0,103.0 C193.2,101.8 195.2,100.7 196.7,99.7 C198.2,98.7 199.6,97.8 201.0,97.0 C202.4,96.2 203.9,95.5 205.3,95.0 C206.7,94.5 207.9,93.8 209.3,94.3 C210.8,94.8 212.6,95.9 214.0,98.0 C215.4,100.1 217.9,104.8 218.0,107.0 C218.1,109.2 216.6,109.7 214.7,111.0 C212.8,112.3 209.4,113.9 206.7,115.0 C204.0,116.1 200.9,117.2 198.7,117.7 C196.5,118.2 194.8,118.2 193.3,117.7 C191.9,117.2 190.7,116.1 190.0,115.0 C189.3,113.9 189.1,112.3 189.0,111.0Z" fill="#f4f4f6"/>
<g clip-path="url(#cE)">
<path d="M186,112 L190,100 L200,96 L200,100 L192,106 Z" fill="#c8d0da" opacity="0.7"/>
<ellipse cx="203.8" cy="106" rx="11" ry="10.8" fill="url(#iris)" transform="rotate(-20 204 106)"/>
<path d="M190,104 Q200,93 216,97 L217,102 Q202,98 191,109Z" fill="#a80c04" opacity="0.55"/>
<path d="M194,115 Q204,118 214,108 L213,112 Q204,119.500 195,118Z" fill="#ff7a50" opacity="0.7"/>
<ellipse cx="208" cy="96.300" rx="3.400" ry="2.100" fill="#fff" transform="rotate(-12 208 96)"/>
</g>
<path d="M189.0,109.0 C189.2,108.3 189.2,106.6 190.5,105.0 C191.8,103.4 194.2,101.2 196.7,99.5 C199.2,97.8 203.1,95.8 205.3,94.8 C207.5,93.8 208.5,93.3 210.0,93.8 C211.5,94.2 213.1,95.4 214.5,97.5 C215.9,99.6 217.7,105.0 218.3,106.5" stroke="#3a1208" stroke-width="1.7" stroke-linecap="round" fill="none"/>
<path d="M190.0,115.5 C190.6,116.0 191.9,117.8 193.3,118.2 C194.8,118.7 196.5,118.7 198.7,118.2 C200.9,117.8 204.0,116.7 206.7,115.5 C209.4,114.3 212.8,112.6 214.7,111.2 C216.6,109.8 217.4,108.0 218.0,107.3" stroke="#6a2a1a" stroke-width="0.9" stroke-linecap="round" fill="none"/>
<path d="M196.0,96.0 C196.8,95.5 198.9,94.0 200.5,93.3 C202.1,92.6 204.5,92.0 205.3,91.7" stroke="#8a4a3a" stroke-width="0.7" fill="none"/>
<path d="M254.5,87.5 C255.8,86.5 258.8,83.2 262.0,81.5 C265.2,79.8 269.8,78.0 274.0,77.5 C278.2,77.0 282.6,77.9 287.0,78.5 C291.4,79.1 298.4,80.6 300.7,81.0" stroke="#4a1a10" stroke-width="1.3" stroke-linecap="round" fill="none"/>
<path d="M262.0,78.0 C264.0,77.5 269.8,75.3 274.0,75.0 C278.2,74.7 284.8,75.8 287.0,76.0" stroke="#7a4a3a" stroke-width="0.6" fill="none"/>
<path d="M256.0,87.5 C255.8,88.0 254.8,90.0 254.5,90.5" stroke="#4a1a10" stroke-width="0.9" fill="none"/>
<path d="M260.0,85.0 C259.8,85.6 259.2,87.9 259.0,88.5" stroke="#4a1a10" stroke-width="0.9" fill="none"/>
<path d="M244.5,142.8 C244.7,142.4 245.8,142.1 246.5,142.2 C247.2,142.3 248.7,143.1 248.8,143.6 C248.9,144.1 247.6,145.0 247.0,145.2 C246.4,145.4 245.6,145.2 245.2,144.8 C244.8,144.4 244.3,143.2 244.5,142.8Z" fill="#ee8aa2" stroke="#a05a6a" stroke-width="0.4"/>
<clipPath id="cFi"><path d="M261.0,144.0 C261.0,142.0 261.5,142.0 263.0,140.0 C264.5,138.0 267.4,134.6 270.0,132.0 C272.6,129.4 276.2,126.6 278.7,124.7 C281.1,122.8 282.1,121.0 284.7,120.7 C287.2,120.4 291.6,122.3 294.0,123.0 C296.4,123.7 297.5,124.8 299.0,124.7 C300.5,124.7 300.8,122.2 303.0,122.7 C305.2,123.2 310.5,127.1 312.0,128.0 C314.0,137.0 322.0,173.0 324.0,182.0 C320.5,181.7 306.5,180.3 303.0,180.0 C300.8,178.2 293.5,172.2 290.0,169.0 C286.5,165.8 283.9,162.7 282.0,161.0 C280.1,159.3 280.2,158.8 278.7,158.7 C277.2,158.6 274.4,160.7 273.0,160.7 C271.6,160.7 271.7,160.1 270.0,158.7 C268.3,157.2 264.5,154.4 263.0,152.0 C261.5,149.6 261.0,146.0 261.0,144.0Z"/></clipPath>
<path d="M261.0,144.0 C261.0,142.0 261.5,142.0 263.0,140.0 C264.5,138.0 267.4,134.6 270.0,132.0 C272.6,129.4 276.2,126.6 278.7,124.7 C281.1,122.8 282.1,121.0 284.7,120.7 C287.2,120.4 291.6,122.3 294.0,123.0 C296.4,123.7 297.5,124.8 299.0,124.7 C300.5,124.7 300.8,122.2 303.0,122.7 C305.2,123.2 310.5,127.1 312.0,128.0 C314.0,137.0 322.0,173.0 324.0,182.0 C320.5,181.7 306.5,180.3 303.0,180.0 C300.8,178.2 293.5,172.2 290.0,169.0 C286.5,165.8 283.9,162.7 282.0,161.0 C280.1,159.3 280.2,158.8 278.7,158.7 C277.2,158.6 274.4,160.7 273.0,160.7 C271.6,160.7 271.7,160.1 270.0,158.7 C268.3,157.2 264.5,154.4 263.0,152.0 C261.5,149.6 261.0,146.0 261.0,144.0Z" fill="#ffeadb"/>
<g clip-path="url(#cFi)">
<path d="M282.0,161.0 C283.3,162.3 286.5,165.8 290.0,169.0 C293.5,172.2 300.8,178.2 303.0,180.0" stroke="#f3caae" stroke-width="6" filter="url(#b2)" opacity="0.7" fill="none"/>
<path d="M263.0,152.0 C264.2,153.1 267.5,157.5 270.0,158.7 C272.5,159.9 276.7,158.9 278.0,159.0" stroke="#f0c4a4" stroke-width="4" filter="url(#b2)" opacity="0.8" fill="none"/>
</g>
<path d="M261.0,144.0 C261.0,142.0 261.5,142.0 263.0,140.0 C264.5,138.0 267.4,134.6 270.0,132.0 C272.6,129.4 276.2,126.6 278.7,124.7 C281.1,122.8 282.1,121.0 284.7,120.7 C287.2,120.4 291.6,122.3 294.0,123.0 C296.4,123.7 297.5,124.8 299.0,124.7 C300.5,124.7 300.8,122.2 303.0,122.7 C305.2,123.2 310.5,127.1 312.0,128.0 C314.0,137.0 322.0,173.0 324.0,182.0 C320.5,181.7 306.5,180.3 303.0,180.0 C300.8,178.2 293.5,172.2 290.0,169.0 C286.5,165.8 283.9,162.7 282.0,161.0 C280.1,159.3 280.2,158.8 278.7,158.7 C277.2,158.6 274.4,160.7 273.0,160.7 C271.6,160.7 271.7,160.1 270.0,158.7 C268.3,157.2 264.5,154.4 263.0,152.0 C261.5,149.6 261.0,146.0 261.0,144.0Z" fill="none" stroke="#8a4a3a" stroke-width="0.8"/>
<g fill="none" stroke="#8a4a3a" stroke-width="0.8" stroke-linecap="round">
<path d="M263.0,140.0 C264.8,139.0 270.7,134.2 274.0,134.0 C277.3,133.8 280.6,137.2 283.0,138.7 C285.4,140.1 287.8,142.0 288.7,142.7" fill="none"/>
<path d="M270.0,132.0 C271.8,131.1 276.9,126.5 280.7,126.7 C284.5,126.9 290.7,131.9 292.7,133.0" fill="none"/>
<path d="M274.7,148.0 C274.8,149.3 274.4,154.2 275.0,156.0 C275.6,157.8 277.5,158.2 278.0,158.7" fill="none"/>
<path d="M299.0,124.7 C299.7,125.2 302.0,126.8 303.0,128.0 C304.0,129.2 304.7,131.3 305.0,132.0" fill="none"/>
</g>
<path d="M200.3,30.3 C200.4,32.8 200.4,39.7 201.0,45.0 C201.6,50.3 202.4,56.5 203.7,62.0 C205.0,67.5 207.0,73.0 209.0,78.0 C211.0,83.0 213.7,88.1 215.7,91.7 C217.7,95.3 219.1,96.7 221.0,99.7 C222.9,102.8 224.8,106.2 227.0,110.0 C229.2,113.8 232.8,120.4 234.0,122.5 C232.7,120.8 229.5,115.4 226.0,112.0 C222.5,108.6 216.5,105.4 213.0,102.0 C209.5,98.6 207.3,95.4 205.0,91.7 C202.7,88.0 201.0,84.3 199.0,80.0 C197.0,75.7 195.2,70.2 193.0,66.0 C190.8,61.8 187.2,56.8 186.0,55.0 C187.0,51.3 191.0,36.7 192.0,33.0 C193.4,32.5 198.9,30.8 200.3,30.3Z" fill="#97592a"/>
<path d="M223.7,37.0 C224.6,39.5 227.0,46.4 229.0,51.7 C231.0,57.0 233.9,63.5 235.7,69.0 C237.5,74.5 238.6,79.8 239.7,85.0 C240.8,90.2 241.6,95.2 242.0,100.0 C242.4,104.8 242.2,108.7 242.0,114.0 C241.8,119.3 241.2,129.0 241.0,132.0 C241.3,129.5 242.2,121.2 243.0,117.0 C243.8,112.8 244.8,111.0 246.0,107.0 C247.2,103.0 249.2,98.7 250.0,93.0 C250.8,87.3 251.2,79.7 251.0,73.0 C250.8,66.3 249.2,58.5 248.7,53.0 C248.2,47.5 248.1,42.2 248.0,40.0 C245.3,38.0 234.7,30.0 232.0,28.0 C230.6,29.5 225.1,35.5 223.7,37.0Z" fill="#97592a"/>
<path d="M251.0,50.0 C251.1,53.8 250.8,66.2 251.5,73.0 C252.2,79.8 254.1,84.7 255.0,90.7 C255.9,96.7 256.7,106.0 257.0,109.0 C257.3,106.8 258.2,100.8 258.7,96.0 C259.2,91.2 260.0,85.3 260.0,80.0 C260.0,74.7 258.9,69.0 258.7,64.0 C258.4,59.0 258.5,52.3 258.5,50.0 C257.2,50.0 252.2,50.0 251.0,50.0Z" fill="#97592a"/>
<path d="M263.0,50.0 C263.0,50.8 262.7,50.9 263.0,54.7 C263.3,58.5 264.3,67.7 265.0,73.0 C265.7,78.3 266.3,82.2 267.0,86.7 C267.7,91.2 268.7,97.8 269.0,100.0 C269.1,96.7 269.4,86.7 269.3,80.0 C269.2,73.3 268.8,65.0 268.7,60.0 C268.6,55.0 268.7,51.7 268.7,50.0 C267.8,50.0 263.9,50.0 263.0,50.0Z" fill="#97592a"/>
<path d="M278.7,50.0 C278.7,51.5 278.4,54.9 278.7,58.7 C279.0,62.5 280.0,68.1 280.7,73.0 C281.4,77.9 281.8,83.0 283.0,88.0 C284.2,93.0 287.2,100.2 288.0,102.7 C287.9,98.9 287.6,87.1 287.3,80.0 C287.0,72.9 286.2,65.0 286.0,60.0 C285.8,55.0 286.0,51.7 286.0,50.0 C284.8,50.0 279.9,50.0 278.7,50.0Z" fill="#97592a"/>
<path d="M292.0,50.0 C292.1,52.8 292.2,60.6 292.7,66.7 C293.2,72.8 294.8,79.4 295.0,86.7 C295.2,94.0 294.2,106.7 294.0,110.7 C294.6,108.1 296.8,105.1 297.5,95.0 C298.2,84.9 297.9,57.5 298.0,50.0 C297.0,50.0 293.0,50.0 292.0,50.0Z" fill="#97592a"/>
<path d="M228.0,30.0 C228.0,33.3 228.0,46.7 228.0,50.0 C231.7,51.2 244.5,56.7 250.0,57.5 C255.5,58.3 257.0,55.1 261.0,55.0 C265.0,54.9 269.4,56.2 274.0,57.0 C278.6,57.8 283.0,59.7 288.7,60.0 C294.4,60.3 304.8,59.2 308.0,59.0 C308.0,54.2 308.0,34.8 308.0,30.0 C294.7,30.0 241.3,30.0 228.0,30.0Z" fill="#97592a"/>
<path d="M297.0,55.0 C296.9,59.8 296.4,76.5 296.7,84.0 C297.0,91.5 297.7,94.0 299.0,100.0 C300.3,106.0 303.1,114.5 304.7,120.0 C306.3,125.5 307.6,127.5 308.7,133.0 C309.8,138.5 311.0,147.7 311.0,153.0 C311.0,158.3 309.1,163.0 308.7,165.0 C309.4,163.3 312.1,155.0 313.0,155.0 C313.9,155.0 313.2,159.7 314.0,165.0 C314.8,170.3 316.5,176.9 317.6,186.6 C318.7,196.3 320.3,211.6 320.4,223.0 C320.5,234.4 319.4,245.0 318.0,255.0 C316.6,265.0 314.4,273.8 311.7,283.0 C309.0,292.2 303.4,305.5 301.7,310.0 C302.8,308.3 305.3,305.0 308.0,300.0 C310.7,295.0 315.2,288.1 318.0,280.0 C320.8,271.9 323.5,263.0 325.0,251.7 C326.5,240.4 326.7,218.6 327.0,212.0 C326.9,217.8 326.2,236.8 326.7,246.7 C327.2,256.6 328.3,263.4 330.0,271.7 C331.7,280.0 334.2,289.2 336.7,296.7 C339.2,304.2 343.1,312.3 345.0,316.7 C346.9,321.1 347.5,321.9 348.0,323.0 C349.0,323.0 353.0,323.0 354.0,323.0 C354.0,311.5 354.0,265.5 354.0,254.0 C353.4,250.4 351.5,240.7 350.6,232.5 C349.7,224.3 349.7,214.2 348.8,205.0 C347.9,195.8 346.5,186.3 345.0,177.5 C343.5,168.7 340.5,156.2 339.6,152.0 C341.0,135.8 346.6,71.2 348.0,55.0 C339.5,55.0 305.5,55.0 297.0,55.0Z" fill="#97592a"/>
<path d="M206.0,196.0 C206.2,199.5 206.2,210.8 207.0,217.0 C207.8,223.2 209.7,227.5 211.0,233.0 C212.3,238.5 213.7,243.8 215.0,250.0 C216.3,256.2 217.2,264.2 219.0,270.0 C220.8,275.8 223.6,278.3 225.7,285.0 C227.8,291.7 230.3,301.7 231.5,310.0 C232.7,318.3 233.0,325.8 233.0,335.0 C233.0,344.2 231.9,360.0 231.7,365.0 C232.7,360.0 236.5,344.2 237.5,335.0 C238.5,325.8 237.8,316.7 237.5,310.0 C237.2,303.3 236.2,297.5 236.0,295.0 C236.3,297.5 236.2,303.3 238.0,310.0 C239.8,316.7 244.2,326.7 246.7,335.0 C249.2,343.3 251.2,353.3 253.0,360.0 C254.8,366.7 256.8,372.5 257.5,375.0 C257.7,372.5 258.5,366.7 258.5,360.0 C258.5,353.3 258.4,343.3 257.7,335.0 C256.9,326.7 254.6,314.2 254.0,310.0 C255.0,314.2 257.9,327.5 260.0,335.0 C262.1,342.5 264.9,349.5 266.7,355.0 C268.5,360.5 270.1,365.8 270.8,368.0 C271.1,365.3 272.8,357.8 272.7,351.7 C272.6,345.6 271.3,337.8 270.0,331.7 C268.7,325.6 267.2,320.0 265.0,315.0 C262.8,310.0 259.8,306.7 257.0,301.7 C254.2,296.7 250.2,289.4 248.0,285.0 C245.8,280.6 245.2,279.5 243.7,275.0 C242.1,270.5 240.0,265.0 238.7,258.0 C237.4,251.0 237.0,239.9 236.0,233.0 C235.0,226.1 233.8,222.9 232.5,216.7 C231.2,210.5 229.2,199.4 228.5,196.0 C224.8,196.0 209.8,196.0 206.0,196.0Z" fill="#97592a"/>
<path d="M186.0,82.0 C186.7,83.8 188.7,89.7 190.0,93.0 C191.3,96.3 192.4,98.8 194.0,102.0 C195.6,105.2 198.6,110.3 199.5,112.0 C199.0,110.4 197.6,105.7 196.5,102.5 C195.4,99.3 194.1,96.4 192.8,93.0 C191.6,89.6 189.6,83.8 189.0,82.0 C188.5,82.0 186.5,82.0 186.0,82.0Z" fill="#97592a"/>
<path d="M205.5,288.0 C204.9,291.7 203.1,303.0 202.0,310.0 C200.9,317.0 200.3,323.3 199.0,330.0 C197.7,336.7 195.8,343.3 194.0,350.0 C192.2,356.7 190.1,364.7 188.0,370.0 C185.9,375.3 184.1,377.5 181.7,381.7 C179.2,385.9 174.7,392.8 173.3,395.0 C175.2,393.2 181.7,387.7 185.0,384.0 C188.3,380.3 190.5,377.0 193.0,373.0 C195.5,369.0 198.3,363.2 200.0,360.0 C201.7,356.8 202.5,355.0 203.0,354.0 C202.5,358.0 201.7,370.3 200.0,378.0 C198.3,385.7 195.1,394.2 193.0,400.0 C190.9,405.8 188.4,410.8 187.5,413.0 C189.9,410.8 197.5,405.0 201.7,400.0 C205.9,395.0 209.4,388.7 212.5,383.0 C215.6,377.3 218.4,371.5 220.0,366.0 C221.6,360.5 221.9,356.0 221.8,350.0 C221.7,344.0 220.6,336.7 219.5,330.0 C218.4,323.3 217.2,316.7 215.0,310.0 C212.8,303.3 207.9,293.3 206.5,290.0 C206.3,289.7 205.7,288.3 205.5,288.0Z" fill="#6c3210"/>
<clipPath id="cFront"><path d="M200.3,30.3 C200.4,32.8 200.4,39.7 201.0,45.0 C201.6,50.3 202.4,56.5 203.7,62.0 C205.0,67.5 207.0,73.0 209.0,78.0 C211.0,83.0 213.7,88.1 215.7,91.7 C217.7,95.3 219.1,96.7 221.0,99.7 C222.9,102.8 224.8,106.2 227.0,110.0 C229.2,113.8 232.8,120.4 234.0,122.5 C232.7,120.8 229.5,115.4 226.0,112.0 C222.5,108.6 216.5,105.4 213.0,102.0 C209.5,98.6 207.3,95.4 205.0,91.7 C202.7,88.0 201.0,84.3 199.0,80.0 C197.0,75.7 195.2,70.2 193.0,66.0 C190.8,61.8 187.2,56.8 186.0,55.0 C187.0,51.3 191.0,36.7 192.0,33.0 C193.4,32.5 198.9,30.8 200.3,30.3Z"/><path d="M223.7,37.0 C224.6,39.5 227.0,46.4 229.0,51.7 C231.0,57.0 233.9,63.5 235.7,69.0 C237.5,74.5 238.6,79.8 239.7,85.0 C240.8,90.2 241.6,95.2 242.0,100.0 C242.4,104.8 242.2,108.7 242.0,114.0 C241.8,119.3 241.2,129.0 241.0,132.0 C241.3,129.5 242.2,121.2 243.0,117.0 C243.8,112.8 244.8,111.0 246.0,107.0 C247.2,103.0 249.2,98.7 250.0,93.0 C250.8,87.3 251.2,79.7 251.0,73.0 C250.8,66.3 249.2,58.5 248.7,53.0 C248.2,47.5 248.1,42.2 248.0,40.0 C245.3,38.0 234.7,30.0 232.0,28.0 C230.6,29.5 225.1,35.5 223.7,37.0Z"/><path d="M251.0,50.0 C251.1,53.8 250.8,66.2 251.5,73.0 C252.2,79.8 254.1,84.7 255.0,90.7 C255.9,96.7 256.7,106.0 257.0,109.0 C257.3,106.8 258.2,100.8 258.7,96.0 C259.2,91.2 260.0,85.3 260.0,80.0 C260.0,74.7 258.9,69.0 258.7,64.0 C258.4,59.0 258.5,52.3 258.5,50.0 C257.2,50.0 252.2,50.0 251.0,50.0Z"/><path d="M263.0,50.0 C263.0,50.8 262.7,50.9 263.0,54.7 C263.3,58.5 264.3,67.7 265.0,73.0 C265.7,78.3 266.3,82.2 267.0,86.7 C267.7,91.2 268.7,97.8 269.0,100.0 C269.1,96.7 269.4,86.7 269.3,80.0 C269.2,73.3 268.8,65.0 268.7,60.0 C268.6,55.0 268.7,51.7 268.7,50.0 C267.8,50.0 263.9,50.0 263.0,50.0Z"/><path d="M278.7,50.0 C278.7,51.5 278.4,54.9 278.7,58.7 C279.0,62.5 280.0,68.1 280.7,73.0 C281.4,77.9 281.8,83.0 283.0,88.0 C284.2,93.0 287.2,100.2 288.0,102.7 C287.9,98.9 287.6,87.1 287.3,80.0 C287.0,72.9 286.2,65.0 286.0,60.0 C285.8,55.0 286.0,51.7 286.0,50.0 C284.8,50.0 279.9,50.0 278.7,50.0Z"/><path d="M292.0,50.0 C292.1,52.8 292.2,60.6 292.7,66.7 C293.2,72.8 294.8,79.4 295.0,86.7 C295.2,94.0 294.2,106.7 294.0,110.7 C294.6,108.1 296.8,105.1 297.5,95.0 C298.2,84.9 297.9,57.5 298.0,50.0 C297.0,50.0 293.0,50.0 292.0,50.0Z"/><path d="M228.0,30.0 C228.0,33.3 228.0,46.7 228.0,50.0 C231.7,51.2 244.5,56.7 250.0,57.5 C255.5,58.3 257.0,55.1 261.0,55.0 C265.0,54.9 269.4,56.2 274.0,57.0 C278.6,57.8 283.0,59.7 288.7,60.0 C294.4,60.3 304.8,59.2 308.0,59.0 C308.0,54.2 308.0,34.8 308.0,30.0 C294.7,30.0 241.3,30.0 228.0,30.0Z"/><path d="M297.0,55.0 C296.9,59.8 296.4,76.5 296.7,84.0 C297.0,91.5 297.7,94.0 299.0,100.0 C300.3,106.0 303.1,114.5 304.7,120.0 C306.3,125.5 307.6,127.5 308.7,133.0 C309.8,138.5 311.0,147.7 311.0,153.0 C311.0,158.3 309.1,163.0 308.7,165.0 C309.4,163.3 312.1,155.0 313.0,155.0 C313.9,155.0 313.2,159.7 314.0,165.0 C314.8,170.3 316.5,176.9 317.6,186.6 C318.7,196.3 320.3,211.6 320.4,223.0 C320.5,234.4 319.4,245.0 318.0,255.0 C316.6,265.0 314.4,273.8 311.7,283.0 C309.0,292.2 303.4,305.5 301.7,310.0 C302.8,308.3 305.3,305.0 308.0,300.0 C310.7,295.0 315.2,288.1 318.0,280.0 C320.8,271.9 323.5,263.0 325.0,251.7 C326.5,240.4 326.7,218.6 327.0,212.0 C326.9,217.8 326.2,236.8 326.7,246.7 C327.2,256.6 328.3,263.4 330.0,271.7 C331.7,280.0 334.2,289.2 336.7,296.7 C339.2,304.2 343.1,312.3 345.0,316.7 C346.9,321.1 347.5,321.9 348.0,323.0 C349.0,323.0 353.0,323.0 354.0,323.0 C354.0,311.5 354.0,265.5 354.0,254.0 C353.4,250.4 351.5,240.7 350.6,232.5 C349.7,224.3 349.7,214.2 348.8,205.0 C347.9,195.8 346.5,186.3 345.0,177.5 C343.5,168.7 340.5,156.2 339.6,152.0 C341.0,135.8 346.6,71.2 348.0,55.0 C339.5,55.0 305.5,55.0 297.0,55.0Z"/><path d="M206.0,196.0 C206.2,199.5 206.2,210.8 207.0,217.0 C207.8,223.2 209.7,227.5 211.0,233.0 C212.3,238.5 213.7,243.8 215.0,250.0 C216.3,256.2 217.2,264.2 219.0,270.0 C220.8,275.8 223.6,278.3 225.7,285.0 C227.8,291.7 230.3,301.7 231.5,310.0 C232.7,318.3 233.0,325.8 233.0,335.0 C233.0,344.2 231.9,360.0 231.7,365.0 C232.7,360.0 236.5,344.2 237.5,335.0 C238.5,325.8 237.8,316.7 237.5,310.0 C237.2,303.3 236.2,297.5 236.0,295.0 C236.3,297.5 236.2,303.3 238.0,310.0 C239.8,316.7 244.2,326.7 246.7,335.0 C249.2,343.3 251.2,353.3 253.0,360.0 C254.8,366.7 256.8,372.5 257.5,375.0 C257.7,372.5 258.5,366.7 258.5,360.0 C258.5,353.3 258.4,343.3 257.7,335.0 C256.9,326.7 254.6,314.2 254.0,310.0 C255.0,314.2 257.9,327.5 260.0,335.0 C262.1,342.5 264.9,349.5 266.7,355.0 C268.5,360.5 270.1,365.8 270.8,368.0 C271.1,365.3 272.8,357.8 272.7,351.7 C272.6,345.6 271.3,337.8 270.0,331.7 C268.7,325.6 267.2,320.0 265.0,315.0 C262.8,310.0 259.8,306.7 257.0,301.7 C254.2,296.7 250.2,289.4 248.0,285.0 C245.8,280.6 245.2,279.5 243.7,275.0 C242.1,270.5 240.0,265.0 238.7,258.0 C237.4,251.0 237.0,239.9 236.0,233.0 C235.0,226.1 233.8,222.9 232.5,216.7 C231.2,210.5 229.2,199.4 228.5,196.0 C224.8,196.0 209.8,196.0 206.0,196.0Z"/><path d="M205.5,288.0 C204.9,291.7 203.1,303.0 202.0,310.0 C200.9,317.0 200.3,323.3 199.0,330.0 C197.7,336.7 195.8,343.3 194.0,350.0 C192.2,356.7 190.1,364.7 188.0,370.0 C185.9,375.3 184.1,377.5 181.7,381.7 C179.2,385.9 174.7,392.8 173.3,395.0 C175.2,393.2 181.7,387.7 185.0,384.0 C188.3,380.3 190.5,377.0 193.0,373.0 C195.5,369.0 198.3,363.2 200.0,360.0 C201.7,356.8 202.5,355.0 203.0,354.0 C202.5,358.0 201.7,370.3 200.0,378.0 C198.3,385.7 195.1,394.2 193.0,400.0 C190.9,405.8 188.4,410.8 187.5,413.0 C189.9,410.8 197.5,405.0 201.7,400.0 C205.9,395.0 209.4,388.7 212.5,383.0 C215.6,377.3 218.4,371.5 220.0,366.0 C221.6,360.5 221.9,356.0 221.8,350.0 C221.7,344.0 220.6,336.7 219.5,330.0 C218.4,323.3 217.2,316.7 215.0,310.0 C212.8,303.3 207.9,293.3 206.5,290.0 C206.3,289.7 205.7,288.3 205.5,288.0Z"/><path d="M186.0,82.0 C186.7,83.8 188.7,89.7 190.0,93.0 C191.3,96.3 192.4,98.8 194.0,102.0 C195.6,105.2 198.6,110.3 199.5,112.0 C199.0,110.4 197.6,105.7 196.5,102.5 C195.4,99.3 194.1,96.4 192.8,93.0 C191.6,89.6 189.6,83.8 189.0,82.0 C188.5,82.0 186.5,82.0 186.0,82.0Z"/></clipPath>
<g clip-path="url(#cFront)">
<path d="M150.0,30.0 C153.3,29.0 161.7,25.3 170.0,24.0 C178.3,22.7 188.3,22.0 200.0,22.0 C211.7,22.0 225.0,22.7 240.0,24.0 C255.0,25.3 275.0,27.0 290.0,30.0 C305.0,33.0 323.3,40.0 330.0,42.0" stroke="#a56a34" stroke-width="24" filter="url(#b8)" opacity="0.8" fill="none"/>
<path d="M300.0,40.0 C304.2,43.3 318.3,50.8 325.0,60.0 C331.7,69.2 335.5,83.3 340.0,95.0 C344.5,106.7 350.0,124.2 352.0,130.0" stroke="#ac7038" stroke-width="18" filter="url(#b5)" opacity="0.7" fill="none"/>
<path d="M120.0,62.0 C125.0,61.3 139.2,59.7 150.0,58.0 C160.8,56.3 179.2,53.0 185.0,52.0" stroke="#a06632" stroke-width="12" filter="url(#b5)" opacity="0.7" fill="none"/>
<path d="M232.0,50.0 C234.3,51.3 241.0,57.0 246.0,58.0 C251.0,59.0 254.7,57.0 262.0,56.0 C269.3,55.0 280.7,50.3 290.0,52.0 C299.3,53.7 309.7,59.7 318.0,66.0 C326.3,72.3 336.3,86.0 340.0,90.0" stroke="#a56a36" stroke-width="12" filter="url(#b5)" opacity="0.75" fill="none"/>
<path d="M206.0,212.0 C208.3,212.7 215.7,214.7 220.0,216.0 C224.3,217.3 230.0,219.3 232.0,220.0" stroke="#a86c38" stroke-width="9" filter="url(#b3)" opacity="0.6" fill="none"/>
<path d="M318.0,183.0 C320.3,183.2 327.3,183.2 332.0,184.0 C336.7,184.8 343.7,187.3 346.0,188.0" stroke="#a86c38" stroke-width="9" filter="url(#b3)" opacity="0.55" fill="none"/>
<path d="M325.0,110.0 C328.3,112.5 338.3,119.2 345.0,125.0 C351.7,130.8 361.7,141.7 365.0,145.0" stroke="#a06632" stroke-width="10" filter="url(#b5)" opacity="0.6" fill="none"/>
<rect x="150" y="185" width="230" height="260" fill="#4a1a04" opacity="0.34" filter="url(#b8)"/>
<ellipse cx="150" cy="70" rx="75" ry="95" fill="#4a1f06" opacity="0.32" filter="url(#b8)"/>
<path d="M212.0,150.0 C214.7,153.3 222.5,165.0 228.0,170.0 C233.5,175.0 239.3,178.7 245.0,180.0 C250.7,181.3 259.2,178.3 262.0,178.0" stroke="#542608" stroke-width="20" filter="url(#b5)" opacity="0.85" fill="none"/>
<path d="M198.0,146.0 C200.3,148.7 206.3,157.5 212.0,162.0 C217.7,166.5 225.0,170.3 232.0,173.0 C239.0,175.7 250.3,177.2 254.0,178.0" stroke="#5a2a0c" stroke-width="12" filter="url(#b3)" opacity="0.7" fill="none"/>
<path d="M240.0,190.0 C242.5,189.3 252.5,186.7 255.0,186.0" stroke="#542608" stroke-width="16" filter="url(#b3)" opacity="0.8" fill="none"/>
<path d="M212.0,240.0 C214.0,246.7 219.0,266.7 224.0,280.0 C229.0,293.3 236.3,307.5 242.0,320.0 C247.7,332.5 255.3,349.2 258.0,355.0" stroke="#5a2c10" stroke-width="16" filter="url(#b3)" opacity="0.55" fill="none"/>
<path d="M322.0,230.0 C321.3,236.7 320.7,258.3 318.0,270.0 C315.3,281.7 308.0,295.0 306.0,300.0" stroke="#5a2c10" stroke-width="8" filter="url(#b3)" opacity="0.55" fill="none"/>
<path d="M338.0,215.0 C338.3,220.8 339.3,237.5 340.0,250.0 C340.7,262.5 340.7,278.3 342.0,290.0 C343.3,301.7 347.0,315.0 348.0,320.0" stroke="#5a2c10" stroke-width="12" filter="url(#b3)" opacity="0.5" fill="none"/>
<path d="M96.0,78.0 C98.7,76.3 106.7,72.0 112.0,68.0 C117.3,64.0 125.3,56.3 128.0,54.0" stroke="#6a3616" stroke-width="4" filter="url(#b2)" opacity="0.5" fill="none"/>
<path d="M106.0,136.0 C108.3,133.0 115.7,124.7 120.0,118.0 C124.3,111.3 130.0,99.7 132.0,96.0" stroke="#6a3616" stroke-width="5" filter="url(#b2)" opacity="0.5" fill="none"/>
<path d="M178.0,166.0 C176.0,162.7 169.7,152.7 166.0,146.0 C162.3,139.3 157.7,129.3 156.0,126.0" stroke="#6a3616" stroke-width="5" filter="url(#b2)" opacity="0.5" fill="none"/>
<path d="M200.0,170.0 C198.3,166.7 193.3,156.0 190.0,150.0 C186.7,144.0 181.7,136.7 180.0,134.0" stroke="#6a3616" stroke-width="5" filter="url(#b2)" opacity="0.5" fill="none"/>
<path d="M241.0,127.0 C241.3,123.8 242.2,113.8 243.0,108.0 C243.8,102.2 245.5,94.7 246.0,92.0" stroke="#5e2e12" stroke-width="4" filter="url(#b2)" opacity="0.55" fill="none"/>
<path d="M233.0,121.0 C231.2,118.2 225.5,109.2 222.0,104.0 C218.5,98.8 213.7,92.3 212.0,90.0" stroke="#5e2e12" stroke-width="4" filter="url(#b2)" opacity="0.55" fill="none"/>
<g fill="none" stroke="#5a2a0e" stroke-width="2.2" stroke-linecap="round" opacity="0.5" filter="url(#b1)">
<path d="M196.0,12.0 C190.8,16.7 174.3,30.0 165.0,40.0 C155.7,50.0 146.8,62.0 140.0,72.0 C133.2,82.0 126.7,95.3 124.0,100.0" fill="none"/>
<path d="M204.0,14.0 C199.7,19.2 185.7,33.2 178.0,45.0 C170.3,56.8 162.7,73.8 158.0,85.0 C153.3,96.2 151.3,107.5 150.0,112.0" fill="none"/>
<path d="M209.0,16.0 C205.8,21.3 195.5,35.7 190.0,48.0 C184.5,60.3 179.0,76.7 176.0,90.0 C173.0,103.3 172.7,121.7 172.0,128.0" fill="none"/>
<path d="M213.0,18.0 C210.5,22.5 201.8,37.7 198.0,45.0 C194.2,52.3 191.3,59.2 190.0,62.0" fill="none"/>
<path d="M175.0,60.0 C173.5,65.8 166.8,83.3 166.0,95.0 C165.2,106.7 167.0,119.8 170.0,130.0 C173.0,140.2 181.7,151.7 184.0,156.0" fill="none"/>
<path d="M186.0,100.0 C185.7,104.2 183.0,116.7 184.0,125.0 C185.0,133.3 189.0,142.2 192.0,150.0 C195.0,157.8 200.3,168.3 202.0,172.0" fill="none"/>
<path d="M236.0,12.0 C242.0,15.3 261.3,23.7 272.0,32.0 C282.7,40.3 292.7,50.7 300.0,62.0 C307.3,73.3 312.3,87.0 316.0,100.0 C319.7,113.0 320.3,126.7 322.0,140.0 C323.7,153.3 325.0,167.5 326.0,180.0 C327.0,192.5 327.7,209.2 328.0,215.0" fill="none"/>
<path d="M256.0,11.0 C263.0,14.5 286.0,22.2 298.0,32.0 C310.0,41.8 320.3,56.2 328.0,70.0 C335.7,83.8 339.0,101.7 344.0,115.0 C349.0,128.3 355.7,144.2 358.0,150.0" fill="none"/>
<path d="M246.0,16.0 C251.7,20.3 271.3,34.7 280.0,42.0 C288.7,49.3 295.0,57.0 298.0,60.0" fill="none"/>
<path d="M286.0,12.0 C292.7,16.3 315.7,28.0 326.0,38.0 C336.3,48.0 344.3,66.3 348.0,72.0" fill="none"/>
<path d="M300.0,60.0 C302.3,65.8 310.0,82.5 314.0,95.0 C318.0,107.5 320.7,121.7 324.0,135.0 C327.3,148.3 331.7,161.7 334.0,175.0 C336.3,188.3 337.3,202.5 338.0,215.0 C338.7,227.5 338.0,244.2 338.0,250.0" fill="none"/>
<path d="M336.0,100.0 C338.3,105.0 344.0,121.3 350.0,130.0 C356.0,138.7 368.3,148.3 372.0,152.0" fill="none"/>
<path d="M214.0,200.0 C215.0,205.8 218.0,224.7 220.0,235.0 C222.0,245.3 223.3,252.8 226.0,262.0 C228.7,271.2 232.3,279.5 236.0,290.0 C239.7,300.5 244.7,313.3 248.0,325.0 C251.3,336.7 254.7,354.2 256.0,360.0" fill="none"/>
<path d="M222.0,200.0 C223.3,206.7 227.3,228.3 230.0,240.0 C232.7,251.7 234.3,260.0 238.0,270.0 C241.7,280.0 247.7,290.0 252.0,300.0 C256.3,310.0 261.0,320.0 264.0,330.0 C267.0,340.0 269.0,355.0 270.0,360.0" fill="none"/>
<path d="M210.0,290.0 C209.0,295.8 206.7,313.3 204.0,325.0 C201.3,336.7 198.0,348.8 194.0,360.0 C190.0,371.2 182.3,386.7 180.0,392.0" fill="none"/>
<path d="M216.0,300.0 C215.3,305.8 214.0,323.7 212.0,335.0 C210.0,346.3 207.0,357.5 204.0,368.0 C201.0,378.5 195.7,393.0 194.0,398.0" fill="none"/>
<path d="M214.0,168.0 C216.3,171.0 223.0,181.3 228.0,186.0 C233.0,190.7 241.3,194.3 244.0,196.0" fill="none"/>
<path d="M222.0,160.0 C224.7,162.5 232.3,171.7 238.0,175.0 C243.7,178.3 253.0,179.2 256.0,180.0" fill="none"/>
<path d="M230.0,40.0 C231.3,43.7 235.7,54.0 238.0,62.0 C240.3,70.0 243.2,79.7 244.0,88.0 C244.8,96.3 243.2,108.0 243.0,112.0" fill="none"/>
<path d="M240.0,36.0 C241.2,39.7 245.5,50.7 247.0,58.0 C248.5,65.3 248.7,76.3 249.0,80.0" fill="none"/>
</g>
</g>
<path d="M173.0,79.7 C174.8,78.6 179.6,75.3 183.7,73.0 C187.8,70.7 195.4,66.9 197.7,65.7" stroke="#4a2010" stroke-width="0.9" stroke-linecap="round" fill="none"/>
<path d="M248.7,59.0 C250.7,58.3 256.5,56.0 260.7,55.0 C264.9,54.0 269.8,53.0 274.0,53.0 C278.2,53.0 282.2,53.9 286.0,54.7 C289.8,55.5 295.2,57.5 297.0,58.0" stroke="#4a2010" stroke-width="0.9" stroke-linecap="round" fill="none"/>
<g fill="none" stroke="#4a200a" stroke-width="0.7" stroke-linecap="round" stroke-linejoin="round" opacity="0.75">
<path d="M200.3,30.3 C200.4,32.8 200.4,39.7 201.0,45.0 C201.6,50.3 202.4,56.5 203.7,62.0 C205.0,67.5 207.0,73.0 209.0,78.0 C211.0,83.0 213.7,88.1 215.7,91.7 C217.7,95.3 219.1,96.7 221.0,99.7 C222.9,102.8 224.8,106.2 227.0,110.0 C229.2,113.8 232.8,120.4 234.0,122.5 C232.7,120.8 229.5,115.4 226.0,112.0 C222.5,108.6 216.5,105.4 213.0,102.0 C209.5,98.6 207.3,95.4 205.0,91.7 C202.7,88.0 201.0,84.3 199.0,80.0 C197.0,75.7 194.0,68.3 193.0,66.0" fill="none"/>
<path d="M223.7,37.0 C224.6,39.5 227.0,46.4 229.0,51.7 C231.0,57.0 233.9,63.5 235.7,69.0 C237.5,74.5 238.6,79.8 239.7,85.0 C240.8,90.2 241.6,95.2 242.0,100.0 C242.4,104.8 242.2,108.7 242.0,114.0 C241.8,119.3 241.2,129.0 241.0,132.0 C241.3,129.5 242.2,121.2 243.0,117.0 C243.8,112.8 244.8,111.0 246.0,107.0 C247.2,103.0 249.2,98.7 250.0,93.0 C250.8,87.3 251.2,79.7 251.0,73.0 C250.8,66.3 249.1,56.3 248.7,53.0" fill="none"/>
<path d="M251.5,73.0 C252.1,76.0 254.1,84.7 255.0,90.7 C255.9,96.7 256.7,106.0 257.0,109.0 C257.3,106.8 258.2,100.8 258.7,96.0 C259.2,91.2 260.0,85.3 260.0,80.0 C260.0,74.7 258.9,66.7 258.7,64.0" fill="none"/>
<path d="M263.0,54.7 C263.3,57.8 264.3,67.7 265.0,73.0 C265.7,78.3 266.3,82.2 267.0,86.7 C267.7,91.2 268.7,97.8 269.0,100.0 C269.1,96.7 269.4,86.7 269.3,80.0 C269.2,73.3 268.8,63.3 268.7,60.0" fill="none"/>
<path d="M278.7,58.7 C279.0,61.1 280.0,68.1 280.7,73.0 C281.4,77.9 281.8,83.0 283.0,88.0 C284.2,93.0 287.2,100.2 288.0,102.7 C287.9,98.9 287.6,87.1 287.3,80.0 C287.0,72.9 286.2,63.3 286.0,60.0" fill="none"/>
<path d="M292.7,66.7 C293.1,70.0 294.8,79.4 295.0,86.7 C295.2,94.0 294.2,106.7 294.0,110.7 C294.6,108.1 296.9,97.6 297.5,95.0" fill="none"/>
<path d="M297.0,55.0 C296.9,59.8 296.4,76.5 296.7,84.0 C297.0,91.5 297.7,94.0 299.0,100.0 C300.3,106.0 303.1,114.5 304.7,120.0 C306.3,125.5 307.6,127.5 308.7,133.0 C309.8,138.5 311.0,147.7 311.0,153.0 C311.0,158.3 309.1,163.0 308.7,165.0 C309.4,163.3 312.1,155.0 313.0,155.0 C313.9,155.0 313.2,159.7 314.0,165.0 C314.8,170.3 316.5,176.9 317.6,186.6 C318.7,196.3 320.3,211.6 320.4,223.0 C320.5,234.4 319.4,245.0 318.0,255.0 C316.6,265.0 314.4,273.8 311.7,283.0 C309.0,292.2 303.4,305.5 301.7,310.0 C302.8,308.3 305.3,305.0 308.0,300.0 C310.7,295.0 315.2,288.1 318.0,280.0 C320.8,271.9 323.5,263.0 325.0,251.7 C326.5,240.4 326.7,218.6 327.0,212.0 C326.9,217.8 326.2,236.8 326.7,246.7 C327.2,256.6 328.3,263.4 330.0,271.7 C331.7,280.0 334.2,289.2 336.7,296.7 C339.2,304.2 343.1,312.3 345.0,316.7 C346.9,321.1 347.5,321.9 348.0,323.0 C349.0,323.0 353.0,323.0 354.0,323.0 C354.0,311.5 354.0,265.5 354.0,254.0 C353.4,250.4 351.5,240.7 350.6,232.5 C349.7,224.3 349.7,214.2 348.8,205.0 C347.9,195.8 346.5,186.3 345.0,177.5 C343.5,168.7 340.5,156.2 339.6,152.0" fill="none"/>
<path d="M206.0,196.0 C206.2,199.5 206.2,210.8 207.0,217.0 C207.8,223.2 209.7,227.5 211.0,233.0 C212.3,238.5 213.7,243.8 215.0,250.0 C216.3,256.2 217.2,264.2 219.0,270.0 C220.8,275.8 223.6,278.3 225.7,285.0 C227.8,291.7 230.3,301.7 231.5,310.0 C232.7,318.3 233.0,325.8 233.0,335.0 C233.0,344.2 231.9,360.0 231.7,365.0 C232.7,360.0 236.5,344.2 237.5,335.0 C238.5,325.8 237.8,316.7 237.5,310.0 C237.2,303.3 236.2,297.5 236.0,295.0 C236.3,297.5 236.2,303.3 238.0,310.0 C239.8,316.7 244.2,326.7 246.7,335.0 C249.2,343.3 251.2,353.3 253.0,360.0 C254.8,366.7 256.8,372.5 257.5,375.0 C257.7,372.5 258.5,366.7 258.5,360.0 C258.5,353.3 258.4,343.3 257.7,335.0 C256.9,326.7 254.6,314.2 254.0,310.0 C255.0,314.2 257.9,327.5 260.0,335.0 C262.1,342.5 264.9,349.5 266.7,355.0 C268.5,360.5 270.1,365.8 270.8,368.0 C271.1,365.3 272.8,357.8 272.7,351.7 C272.6,345.6 271.3,337.8 270.0,331.7 C268.7,325.6 267.2,320.0 265.0,315.0 C262.8,310.0 259.8,306.7 257.0,301.7 C254.2,296.7 250.2,289.4 248.0,285.0 C245.8,280.6 245.2,279.5 243.7,275.0 C242.1,270.5 240.0,265.0 238.7,258.0 C237.4,251.0 237.0,239.9 236.0,233.0 C235.0,226.1 233.8,222.9 232.5,216.7 C231.2,210.5 229.2,199.4 228.5,196.0" fill="none"/>
<path d="M205.5,288.0 C204.9,291.7 203.1,303.0 202.0,310.0 C200.9,317.0 200.3,323.3 199.0,330.0 C197.7,336.7 195.8,343.3 194.0,350.0 C192.2,356.7 190.1,364.7 188.0,370.0 C185.9,375.3 184.1,377.5 181.7,381.7 C179.2,385.9 174.7,392.8 173.3,395.0 C175.2,393.2 181.7,387.7 185.0,384.0 C188.3,380.3 190.5,377.0 193.0,373.0 C195.5,369.0 198.3,363.2 200.0,360.0 C201.7,356.8 202.5,355.0 203.0,354.0 C202.5,358.0 201.7,370.3 200.0,378.0 C198.3,385.7 195.1,394.2 193.0,400.0 C190.9,405.8 188.4,410.8 187.5,413.0 C189.9,410.8 197.5,405.0 201.7,400.0 C205.9,395.0 209.4,388.7 212.5,383.0 C215.6,377.3 218.4,371.5 220.0,366.0 C221.6,360.5 221.9,356.0 221.8,350.0 C221.7,344.0 220.6,336.7 219.5,330.0 C218.4,323.3 217.2,316.7 215.0,310.0 C212.8,303.3 207.9,293.3 206.5,290.0 C206.3,289.7 205.7,288.3 205.5,288.0" fill="none"/>
<path d="M186.0,82.0 C186.7,83.8 188.7,89.7 190.0,93.0 C191.3,96.3 192.4,98.8 194.0,102.0 C195.6,105.2 198.6,110.3 199.5,112.0 C199.0,110.4 197.6,105.7 196.5,102.5 C195.4,99.3 194.1,96.4 192.8,93.0 C191.6,89.6 189.6,83.8 189.0,82.0" fill="none"/>
</g>
</svg>

<!-- ===== scrollbars of canvas ===== -->
<div class="abs" style="left:621px;top:10px;width:16px;height:565px;background:#f0f0f0;border-left:1px solid #d8d8d8;"></div>
<div class="abs" style="left:22px;top:575px;width:599px;height:16px;background:#f0f0f0;border-top:1px solid #d8d8d8;"></div>
<div class="abs" style="left:621px;top:575px;width:16px;height:16px;background:#dedede;"></div>
<div class="sbtn" style="left:622px;top:12px;width:14px;height:14px;"><i class="tri-u" style="left:1.5px;top:3px;"></i></div>
<div class="sbtn" style="left:622px;top:208px;width:14px;height:60px;"></div>
<div class="sbtn" style="left:622px;top:561px;width:14px;height:14px;"><i class="tri-d" style="left:1.5px;top:4px;"></i></div>
<div class="sbtn" style="left:23px;top:576px;width:14px;height:14px;"><i class="tri-l" style="left:2.5px;top:1.5px;"></i></div>
<div class="sbtn" style="left:227px;top:576px;width:169px;height:14px;"></div>
<div class="sbtn" style="left:606px;top:576px;width:14px;height:14px;"><i class="tri-r" style="left:4px;top:1.5px;"></i></div>

<!-- ===== top strip ===== -->
<div class="abs" style="left:0;top:0;width:800px;height:9px;background:#f9f9f9;"></div>
<div class="lbtn" style="left:20px;top:-10px;width:19px;height:16px;"></div><div class="abs" style="left:25px;top:2px;width:9px;height:1.5px;background:#f6f6f6;"></div><div class="abs" style="left:47px;top:2px;width:9px;height:1.5px;background:#f6f6f6;"></div>
<div class="lbtn" style="left:42px;top:-10px;width:19px;height:16px;"></div>
<div class="lbtn" style="left:69px;top:-10px;width:19px;height:16px;"></div>
<div class="lbtn" style="left:91px;top:-10px;width:19px;height:16px;"></div>
<div class="abs" style="left:115px;top:-8px;width:12px;height:12px;background:#fff;border:1.500px solid #555;border-radius:2.500px;"></div>
<div class="abs" style="left:119px;top:-2px;width:4px;height:3px;background:#000;border-radius:0 0 2px 2px;"></div>
<span class="t" style="left:130px;top:-6.5px;font-size:11.500px;letter-spacing:-0.300px;">選択領域表示</span>
<div class="box" style="left:206px;top:-12px;width:66px;height:19px;border-color:#b0b0b0;"></div>
<span class="t" style="left:212px;top:-6px;font-size:10.500px;">66.66%</span>
<div class="sbtn" style="left:256px;top:-10px;width:14px;height:14px;"></div>
<div class="sbtn" style="left:275px;top:-10px;width:17px;height:16px;"></div>
<div class="sbtn" style="left:294px;top:-10px;width:17px;height:16px;"></div>
<div class="sbtn" style="left:314px;top:-10px;width:17px;height:16px;"></div>
<div class="box" style="left:339px;top:-12px;width:60px;height:19px;border-color:#b0b0b0;"></div>
<span class="t" style="left:348px;top:-6px;font-size:10.500px;">+000</span>
<div class="sbtn" style="left:383px;top:-10px;width:14px;height:14px;"></div>
<div class="sbtn" style="left:401px;top:-10px;width:17px;height:16px;"></div>
<div class="sbtn" style="left:421px;top:-10px;width:17px;height:16px;"></div>
<div class="sbtn" style="left:441px;top:-10px;width:17px;height:16px;"></div>
<div class="box" style="left:466px;top:-12px;width:37px;height:19px;border-color:#b0b0b0;"></div>
<span class="t" style="left:472px;top:-6.5px;font-size:11px;">通常</span>
<div class="sbtn" style="left:505px;top:-10px;width:19px;height:16px;"></div>
<div class="abs" style="left:508px;top:-1px;width:10px;height:2px;background:#e8e8e8;"></div>
<span class="t" style="left:531px;top:-7px;font-size:11.500px;letter-spacing:-1.800px;">手ブレ補正</span>
<div class="box" style="left:585px;top:-12px;width:45px;height:19px;border-color:#b0b0b0;"></div>
<span class="t" style="left:590px;top:-6px;font-size:10.500px;">3</span>
<div class="sbtn" style="left:614px;top:-10px;width:14px;height:14px;"></div>

<!-- ===== left panel ===== -->
<div class="abs" style="left:0;top:8px;width:21px;height:592px;background:#fafafa;"></div>
<svg class="abs" style="left:2.5px;top:10.5px;" width="13.5" height="13.5" viewBox="0 0 16 16"><path d="M3.500,4.800 Q8.500,4.300 9.500,9.500" fill="none" stroke="#000" stroke-width="1.300"/><path d="M0.800,4.800 L4.800,2.200 L4.800,7.300 Z M9.300,13.500 L6.800,9.300 L12,9 Z" fill="#000"/></svg>
<div class="abs" style="left:-2px;top:25px;width:17px;height:25px;background:#4d4d4d;border:1px solid #fff;outline:1px solid #c8c8c8;"></div>
<!-- scroll box 1 -->
<div class="abs" style="left:-2px;top:55px;width:19px;height:101px;background:#f2f2f2;border:1px solid #b9b9b9;border-radius:3px;"></div>
<div class="abs" style="left:0;top:56px;width:2px;height:99px;background:#e2e2f2;"></div>
<div class="sbtn" style="left:1px;top:58px;width:14px;height:15px;border-width:2px;"><i class="tri-u" style="left:1px;top:3.500px;"></i></div>
<div class="sbtn" style="left:1px;top:74px;width:14px;height:11px;border-width:2px;"></div>
<div class="sbtn" style="left:1px;top:140px;width:14px;height:15px;border-width:2px;"><i class="tri-d" style="left:1px;top:4px;"></i></div>
<!-- value boxes -->
<div class="box" style="left:-3px;top:166px;width:19px;height:16px;border-color:#d4d4d4;"></div>
<div class="abs" style="left:0;top:169px;width:12px;height:9px;background:#cbcbcb;"></div>
<div class="box lv" style="left:-3px;top:188px;width:19px;height:14px;"></div>
<div class="box lv" style="left:-3px;top:225px;width:19px;height:14px;"></div>
<div class="box lv" style="left:-3px;top:246px;width:19px;height:14px;"></div>
<div class="box lv" style="left:-3px;top:266px;width:19px;height:15px;"></div>
<div class="box lv" style="left:-3px;top:306px;width:19px;height:17px;"></div>
<div class="abs" style="left:1px;top:309px;width:13px;height:12px;background:#dadada;border:1.500px solid #c8c8c8;border-radius:2px;"><i class="tri-d" style="left:1px;top:3px;"></i></div>
<div class="box lv" style="left:-3px;top:327px;width:19px;height:14px;"></div>
<div class="box lv" style="left:-3px;top:344px;width:19px;height:14px;"></div>
<div class="box lv" style="left:-3px;top:361px;width:19px;height:14px;"></div>
<div class="box lv" style="left:-3px;top:377px;width:19px;height:14px;"></div>
<svg class="abs" style="left:0;top:160px;" width="21" height="260" viewBox="0 160 21 260" font-family="'Liberation Sans','IPAPGothic','IPAGothic',sans-serif" fill="#b6b6b6" font-size="10">
  <text x="2" y="199.500" textLength="11" lengthAdjust="spacingAndGlyphs">.0</text>
  <text x="1" y="236.500" textLength="11.500" lengthAdjust="spacingAndGlyphs">32</text>
  <text x="1" y="257.500" textLength="11.500" lengthAdjust="spacingAndGlyphs">50</text>
  <text x="1" y="278" textLength="11.500" lengthAdjust="spacingAndGlyphs">95</text>
  <text x="7" y="338.500" textLength="5.500" lengthAdjust="spacingAndGlyphs">0</text>
  <text x="7" y="355.500" textLength="5.500" lengthAdjust="spacingAndGlyphs">0</text>
  <text x="1" y="372.500" textLength="12" lengthAdjust="spacingAndGlyphs">8%</text>
  <text x="1" y="388.500" textLength="11.500" lengthAdjust="spacingAndGlyphs">56</text>
</svg>
<div class="abs" style="left:-4px;top:398px;width:6.500px;height:4.500px;border:1.500px solid #b4b4b4;"></div><div class="abs" style="left:0;top:404px;width:3px;height:1.500px;background:#b4b4b4;"></div>
<!-- scroll box 2 -->
<div class="abs" style="left:-2px;top:411px;width:19px;height:195px;background:#f2f2f2;border:1px solid #c4c4c4;border-radius:3px;"></div>
<div class="abs" style="left:1px;top:413px;width:13px;height:14px;background:#e0e0e0;border:1.500px solid #cacaca;border-radius:2px;"><i class="tri-u" style="left:1px;top:3.500px;"></i></div>
<div class="abs" style="left:1px;top:457px;width:13px;height:138px;background:#e8e8e8;border:1.500px solid #cecece;border-radius:2px;"></div>
<div class="abs" style="left:1px;top:597px;width:13px;height:10px;background:#e8e8e8;border:1.500px solid #cecece;border-radius:2px;"></div>

<!-- ===== right panel ===== -->
<div class="abs" style="left:638px;top:0;width:162px;height:600px;background:#f6f6f6;"></div>
<div class="abs" style="left:641px;top:0;width:1px;height:600px;background:#dcdcdc;"></div>
<div class="abs" style="left:642px;top:0;width:158px;height:600px;background:#f7f7f7;"></div>
<!-- row: paper texture (cut off) -->
<div class="box" style="left:707px;top:-8px;width:90px;height:17px;"></div>
<div class="abs" style="left:781px;top:-7px;width:14px;height:14px;background:#d9d9d9;border:1px solid #c2c2c2;border-radius:2px;"></div>
<!-- row 2 -->
<div class="gbox" style="left:656px;top:13px;width:87px;height:15px;background:linear-gradient(90deg,#e2e2e2 0,#e2e2e2 18px,#f0f0f0 18px);"></div>
<div class="gbox" style="left:747px;top:13px;width:50px;height:15px;background:linear-gradient(90deg,#e2e2e2 0,#e2e2e2 9px,#f0f0f0 9px);"></div>
<!-- row 3 -->
<div class="box" style="left:707px;top:33px;width:90px;height:17px;"></div>
<div class="abs" style="left:781px;top:35px;width:14px;height:14px;background:#d9d9d9;border:1px solid #c2c2c2;border-radius:2px;"><i class="tri-d" style="left:2px;top:5px;"></i></div>
<!-- row 4 -->
<div class="gbox" style="left:656px;top:54px;width:87px;height:15px;background:linear-gradient(90deg,#e2e2e2 0,#e2e2e2 4px,#f0f0f0 4px);"></div>
<div class="gbox" style="left:747px;top:54px;width:50px;height:15px;background:#e4e4e4;"></div>
<!-- blend mode -->
<div class="box" style="left:700px;top:77px;width:97px;height:17px;"></div>
<div class="abs" style="left:781px;top:79px;width:14px;height:14px;background:#d9d9d9;border:1px solid #c2c2c2;border-radius:2px;"><i class="tri-d" style="left:2px;top:5px;"></i></div>
<!-- opacity -->
<div class="gbox" style="left:700px;top:97px;width:97px;height:16px;background:#e6e6e6;"></div>
<!-- checkboxes -->
<div class="abs" style="left:646px;top:118px;width:12px;height:12px;background:#fdfdfd;border:1px solid #c0c0c0;border-radius:2px;"></div>
<div class="abs" style="left:646px;top:133px;width:12px;height:12px;background:#fdfdfd;border:1px solid #c0c0c0;border-radius:2px;"></div>
<div class="abs" style="left:646px;top:148px;width:12px;height:12px;background:#fdfdfd;border:1px solid #c0c0c0;border-radius:6px;"></div>
<!-- layer panel -->
<div class="abs" style="left:646px;top:163px;width:152px;height:440px;background:#f8f8f8;border:1px solid #d4d4d4;border-radius:2px;"></div>
<div class="abs" style="left:647px;top:209px;width:135px;height:391px;background:#ececec;"></div>
<div class="abs" style="left:647px;top:209px;width:25px;height:46px;background:#e8e8e8;"></div>
<div class="abs" style="left:672px;top:209px;width:109px;height:9px;background:#fafafa;"></div>
<div class="abs" style="left:672px;top:219px;width:109px;height:40px;background:#fafafa;"></div>
<div class="abs" style="left:782px;top:209px;width:16px;height:391px;background:#ededed;border-left:1px solid #d8d8d8;"></div>
<div class="abs" style="left:783px;top:210px;width:14px;height:15px;background:#d6d6d6;border:1.5px solid #bdbdbd;border-radius:2px;"><i class="tri-u" style="left:1.5px;top:4px;"></i></div>
<div class="abs" style="left:783px;top:583px;width:14px;height:15px;background:#dcdcdc;border:1.5px solid #c6c6c6;border-radius:2px;"><i class="tri-d" style="left:1.5px;top:4px;"></i></div>
<div class="abs" style="left:784px;top:428px;width:12px;height:152px;background:#e4e4e4;border:1px solid #d2d2d2;border-radius:2px;"></div>
<!-- layer rows boxes -->
<div class="abs" style="left:675px;top:200px;width:16px;height:14px;background:#fbfbfb;border:1px solid #c4c4c4;border-radius:2px;clip-path:inset(9px 0 0 0);"></div>
<div class="abs" style="left:675px;top:223px;width:16px;height:16px;background:#f4f4f4;border:1px solid #c0c0c0;border-radius:2px;"></div>
<div class="abs" style="left:675px;top:240px;width:16px;height:16px;background:#fbfbfb;border:1px solid #c4c4c4;border-radius:2px;"></div>

<svg class="abs" style="left:640px;top:0;" width="160" height="260" viewBox="640 0 160 260" font-family="'Liberation Sans','IPAPGothic','IPAGothic',sans-serif" fill="#aaaaaa">
  <text x="656" y="4.5" font-size="11.5" textLength="44" lengthAdjust="spacingAndGlyphs">用紙質感</text>
  <text x="711" y="5" font-size="11" textLength="52" lengthAdjust="spacingAndGlyphs">【質感なし】</text>
  <text x="660" y="24.5" font-size="9" textLength="17" lengthAdjust="spacingAndGlyphs">倍率</text>
  <text x="717" y="25" font-size="10" textLength="22" lengthAdjust="spacingAndGlyphs">100%</text>
  <text x="750" y="24.5" font-size="9" textLength="15" lengthAdjust="spacingAndGlyphs">強さ</text>
  <text x="782" y="25" font-size="10" textLength="10.5" lengthAdjust="spacingAndGlyphs">20</text>
  <text x="656" y="46.5" font-size="11.5" textLength="44" lengthAdjust="spacingAndGlyphs">画材効果</text>
  <text x="711" y="46.5" font-size="11" textLength="52" lengthAdjust="spacingAndGlyphs">【効果なし】</text>
  <text x="660" y="65.5" font-size="9" textLength="7" lengthAdjust="spacingAndGlyphs">幅</text>
  <text x="737.5" y="66" font-size="10">1</text>
  <text x="750" y="65.5" font-size="9" textLength="15" lengthAdjust="spacingAndGlyphs">強さ</text>
  <text x="776" y="66" font-size="10" textLength="16" lengthAdjust="spacingAndGlyphs">100</text>
  <text x="646" y="90.5" font-size="11.5" textLength="46" lengthAdjust="spacingAndGlyphs">合成ﾓｰﾄﾞ</text>
  <text x="706" y="90" font-size="11" textLength="22" lengthAdjust="spacingAndGlyphs">通常</text>
  <text x="646" y="110.5" font-size="11.5" textLength="44" lengthAdjust="spacingAndGlyphs">不透明度</text>
  <text x="772" y="110" font-size="10" textLength="22" lengthAdjust="spacingAndGlyphs">100%</text>
  <text x="661" y="129" font-size="11.5" textLength="66" lengthAdjust="spacingAndGlyphs">不透明度保護</text>
  <text x="661" y="144" font-size="11.5" textLength="97" lengthAdjust="spacingAndGlyphs">下のﾚｲﾔｰでｸﾘｯﾋﾟﾝｸﾞ</text>
  <text x="661" y="159" font-size="11.5" textLength="86" lengthAdjust="spacingAndGlyphs">領域検出元に指定</text>
  <text x="727" y="213.5" font-size="8" textLength="19" lengthAdjust="spacingAndGlyphs" style="clip-path:inset(0)">100%</text>
  <text x="727" y="233.5" font-size="11.5" textLength="11.5" lengthAdjust="spacingAndGlyphs">顔</text>
  <text x="727" y="245.5" font-size="10" textLength="19" lengthAdjust="spacingAndGlyphs">通常</text>
  <text x="727" y="256" font-size="8.5" textLength="19" lengthAdjust="spacingAndGlyphs">100%</text>
  <!-- icons row 1 -->
  <g fill="#fcfcfc" stroke="#b8b8b8" stroke-width="1">
    <path d="M657.5,168.5 h8 l4.5,4.5 v11 h-12.5 z M665.5,168.5 v4.5 h4.5"/>
    <path d="M680.5,168.5 h13 v15.500 h-13 z"/>
    <path d="M704.500,175.500 v-2 q0,-1.500 1.500,-1.500 h3.500 l1.500,1.800 h5 q1.500,0 1.500,1.500 v6.700 q0,1.500 -1.500,1.500 h-10 q-1.500,0 -1.500,-1.500 z"/>
    <rect x="775.5" y="170.500" width="13" height="13" fill="#e2e2e2"/>
    <circle cx="782" cy="177" r="4" fill="#f6f6f6" stroke="none"/>
    <!-- row 2 -->
    <path d="M657.5,190.500 h9 v9 h-9 z M661.500,197.500 h9.500 v9 h-9.500 z"/>
    <path d="M681.5,190.500 h8 v9 h-8 z M684.5,194.500 h9.500 v12 h-9.500 z"/>
    <path d="M704.500,190.500 h12.500 v15.500 h-12.500 z"/>
    <path d="M728.500,194.500 h10.500 l-1,11.500 h-8.500 z M727.500,192.500 h12.500 M731.500,192 v-1.500 h4.500 v1.500"/>
    <path d="M750.500,191.500 h9 v9 h-9 z M755.500,198.500 h6 v7 h-6 z M761.500,198.500 h5 v7 h-5 z" stroke-dasharray="1.500 1"/>
    <path d="M775.5,190.500 h10 v10 h-10 z M779.500,197.500 h9.500 v9 h-9.500 z"/>
  </g>
  <g fill="none" stroke="#b0b0b0" stroke-width="1">
    <path d="M683,182 l2,-6 l5,-5 l2.500,2.500 l-5,5 z M691,168.500 l2.500,2.500"/>
    <path d="M663,192.500 v4 M661,194.500 h4 M666,200 v4 M664,202 l2,2.500 l2,-2.500"/>
    <path d="M689,197 v6 M686.500,200.500 l2.500,3 l2.500,-3"/>
    <path d="M706.500,199 l6,-6 l3,3 l-6,6 z M709,196 l3,3"/>
    <path d="M731.500,196.500 v7.500 M734,196.500 v7.500 M736.500,196.500 v7.500"/>
    <path d="M784,199.500 v5 M781.500,202 h5"/>
  </g>
  <!-- eye icon -->
  <g fill="none" stroke="#b4b4b4" stroke-width="0.9">
    <path d="M677.5,232 q5.500,-5 11,0 q-5.500,4.500 -11,0 z M678,229 q5,-4 10,0"/>
    <circle cx="683" cy="232" r="1.800" fill="#c0c0c0"/>
  </g>
  <!-- folder icon -->
  <path d="M698.500,235 v-3 q0,-1.500 1.500,-1.500 h6 l2,2 h9.500 q1.500,0 1.500,1.500 v10.500 q0,1.500 -1.500,1.500 h-17.500 q-1.500,0 -1.500,-1.500 z" fill="#e6e6e6" stroke="#c4c4c4" stroke-width="1"/>
</svg>

<!-- ===== dialog ===== -->
<div class="abs" id="dlg" style="left:347px;top:253px;width:450px;height:176px;">
  <div class="abs" style="left:0;top:0;width:449px;height:25px;background:#b3b3fd;border:2px solid #6757e0;border-right-width:3px;border-left-width:3px;border-radius:4px 4px 0 0;"></div>
  <div class="abs" style="left:1px;top:25px;width:448px;height:151px;background:#fbfbfb;border:1px solid #8a9090;border-top:none;border-right:2px solid #8c8c8c;border-radius:0 0 3px 3px;"></div>
  <svg class="abs" style="left:5px;top:5px;" width="16" height="16" viewBox="0 0 16 16">
    <defs><radialGradient id="icg" cx="0.55" cy="0.4" r="0.55"><stop offset="0" stop-color="#fff"/><stop offset="0.35" stop-color="#d8f8a0"/><stop offset="0.7" stop-color="#58d838"/><stop offset="1" stop-color="#18882c"/></radialGradient></defs>
    <path d="M0.5,3 Q1,0.5 6,0.5 Q14,0.5 15,7 L15,13 Q14,15 12,15 L1,15 Q0,15 0.5,12 Z" fill="#1e8a30"/>
    <circle cx="8.5" cy="6.5" r="6" fill="url(#icg)"/>
    <path d="M13,3 Q15.5,7 13.5,11" stroke="#f07820" stroke-width="1.6" fill="none"/>
    <path d="M10.5,1.2 Q12.5,2 13.5,3.5" stroke="#f0e040" stroke-width="1.4" fill="none"/>
    <path d="M1,2 L3,0.8" stroke="#4060e0" stroke-width="1.5"/>
    <path d="M1,8.5 L13,13.5" stroke="#6a3a10" stroke-width="1.3"/>
    <path d="M1,10.3 L12.5,14.6" stroke="#d8a040" stroke-width="1"/>
    <path d="M12.5,13.3 L14.5,14.2" stroke="#f0f0f0" stroke-width="1.2"/>
  </svg>
  <span class="t" style="left:24.5px;top:7px;font-size:12px;font-weight:bold;color:#fff;letter-spacing:0px;">色相･彩度</span>
  <div class="abs" style="left:427px;top:5px;width:17px;height:17px;background:#e84a7c;border:2px solid #c02434;border-radius:3px;"></div>
  <svg class="abs" style="left:427px;top:5px;" width="17" height="17" viewBox="0 0 17 17"><path d="M4.8,4.8 L12.2,12.2 M12.2,4.8 L4.8,12.2" stroke="#fff" stroke-width="2" stroke-linecap="round"/></svg>

  <span class="t" style="left:60.5px;top:50px;font-size:11.5px;">色相</span>
  <span class="t" style="left:60.5px;top:78px;font-size:11.5px;">彩度</span>
  <span class="t" style="left:60.5px;top:106px;font-size:11.5px;">明度</span>
  <div class="abs" style="left:94px;top:54.5px;width:306px;height:2px;background:#747474;"></div>
  <div class="abs" style="left:94px;top:82.5px;width:306px;height:2px;background:#747474;"></div>
  <div class="abs" style="left:94px;top:110.5px;width:306px;height:2px;background:#747474;"></div>
  <div class="abs" style="left:245px;top:110px;width:2px;height:3px;background:#fbfbfb;"></div>
  <svg class="abs" style="left:0;top:0;" width="450" height="176" viewBox="0 0 450 176">
    <g fill="#fff" stroke="#6a6a6a" stroke-width="0.9">
      <path d="M246,55.6 L250.2,61.6 L241.8,61.6 Z"/>
      <path d="M246,83.6 L250.2,89.6 L241.8,89.6 Z"/>
      <path d="M261.3,111.6 L265.5,117.6 L257.1,117.6 Z"/>
    </g>
  </svg>
  <span class="t" style="left:389px;top:46px;font-size:8.5px;font-weight:bold;letter-spacing:-0.3px;">+0</span>
  <span class="t" style="left:389px;top:74px;font-size:8.5px;font-weight:bold;letter-spacing:-0.3px;">+0</span>
  <span class="t" style="left:384.5px;top:102px;font-size:8.5px;font-weight:bold;letter-spacing:-0.3px;">+10</span>

  <div class="abs" style="left:94px;top:139px;width:12px;height:12px;background:#fff;border:1.5px solid #7a7a7a;border-radius:2.5px;"></div>
  <svg class="abs" style="left:94px;top:139px;" width="12" height="12" viewBox="0 0 12 12"><path d="M2.6,6 L5,8.6 L9.6,3.2" stroke="#000" stroke-width="1.9" fill="none" stroke-linecap="round" stroke-linejoin="round"/></svg>
  <span class="t" style="left:108px;top:140px;font-size:12px;letter-spacing:0px;">ﾌﾟﾚﾋﾞｭｰ</span>

  <div class="abs" style="left:253px;top:139.5px;width:72px;height:19px;background:#b4b4b4;border:2px solid #4e4e4e;border-radius:3px;"></div>
  <span class="t" style="left:253px;top:144px;width:72px;text-align:center;font-size:10.5px;font-weight:bold;color:#fff;letter-spacing:0.8px;">OK</span>
  <div class="abs" style="left:332px;top:139.5px;width:71px;height:19px;background:#b4b4b4;border:2px solid #4e4e4e;border-radius:3px;"></div>
  <span class="t" style="left:332px;top:144px;width:71px;text-align:center;font-size:10.5px;font-weight:bold;color:#fff;letter-spacing:-0.6px;">キャンセル</span>
</div>

<!-- ===== status ===== -->
<div class="abs" style="left:21px;top:593px;width:620px;height:7px;background:#f8f8f8;"></div>
<div class="abs" style="left:23px;top:594px;width:145px;height:10px;background:#e6e6fa;border:1px solid #c8c8e8;border-radius:2px 2px 0 0;"></div>
<div class="abs" style="left:26px;top:596px;width:8px;height:6px;background:#a8d0e8;border:1px solid #c0d8e8;"></div>


</body>
</html>
